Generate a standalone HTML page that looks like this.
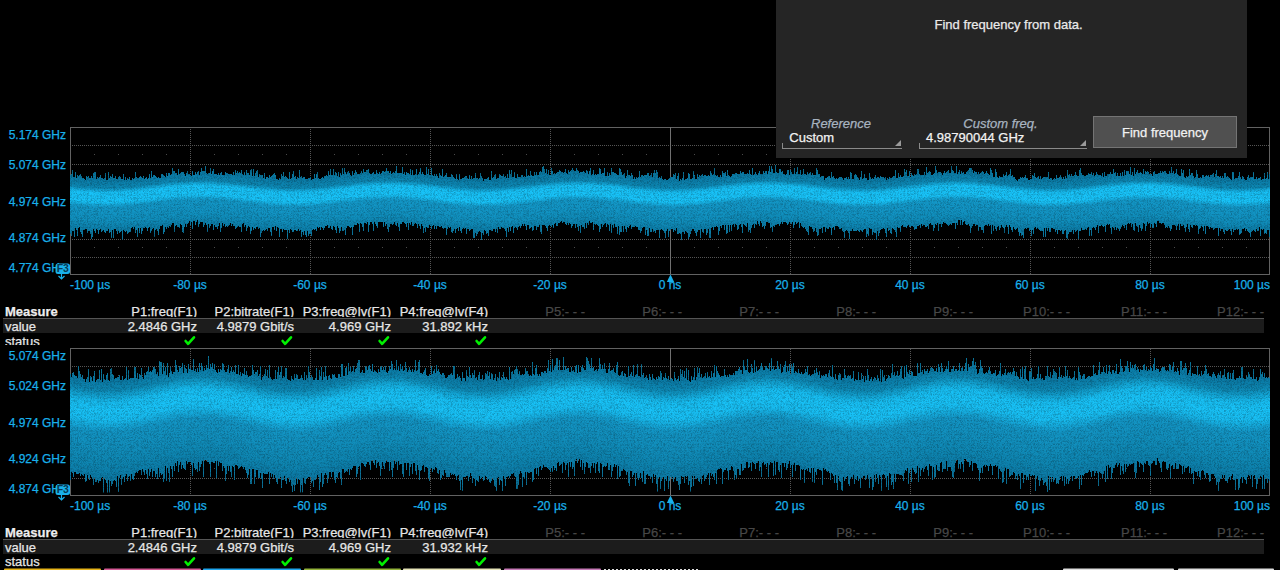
<!DOCTYPE html>
<html><head><meta charset="utf-8"><style>
html,body{margin:0;padding:0;background:#000;width:1280px;height:570px;overflow:hidden}
body{position:relative;font-family:"Liberation Sans",sans-serif}
.t{position:absolute;white-space:nowrap;line-height:1;-webkit-text-stroke:0.25px currentColor}
</style></head><body>
<svg width="1280" height="570" viewBox="0 0 1280 570" style="position:absolute;left:0;top:0"><defs><pattern id="hdot" x="0" y="0" width="2" height="1" patternUnits="userSpaceOnUse"><rect width="1" height="1" fill="#555"/></pattern><pattern id="vdot" x="0" y="1" width="1" height="2" patternUnits="userSpaceOnUse"><rect width="1" height="1" fill="#555"/></pattern><filter id="wf0" x="0" y="117" width="1280" height="170" filterUnits="userSpaceOnUse" color-interpolation-filters="sRGB"><feTurbulence type="turbulence" baseFrequency="3.7" numOctaves="1" seed="3" result="t"/><feColorMatrix in="t" type="matrix" values="1 0 0 0 0  1 0 0 0 0  1 0 0 0 0  0 0 0 0 1" result="n0"/><feComponentTransfer in="n0" result="n"><feFuncR type="table" tableValues="1 0.5 0.5"/><feFuncG type="table" tableValues="1 0.5 0.5"/><feFuncB type="table" tableValues="1 0.5 0.5"/></feComponentTransfer><feComposite in="SourceGraphic" in2="n" operator="arithmetic" k1="0.5" k2="0.55" k3="0" k4="0"/></filter><filter id="wf1" x="0" y="337" width="1280" height="170" filterUnits="userSpaceOnUse" color-interpolation-filters="sRGB"><feTurbulence type="turbulence" baseFrequency="3.7" numOctaves="1" seed="5" result="t"/><feColorMatrix in="t" type="matrix" values="1 0 0 0 0  1 0 0 0 0  1 0 0 0 0  0 0 0 0 1" result="n0"/><feComponentTransfer in="n0" result="n"><feFuncR type="table" tableValues="1 0.5 0.5"/><feFuncG type="table" tableValues="1 0.5 0.5"/><feFuncB type="table" tableValues="1 0.5 0.5"/></feComponentTransfer><feComposite in="SourceGraphic" in2="n" operator="arithmetic" k1="0.5" k2="0.55" k3="0" k4="0"/></filter></defs><rect x="71" y="145" width="1198" height="1" fill="url(#hdot)"/>
<rect x="71" y="164" width="1198" height="1" fill="url(#hdot)"/>
<rect x="71" y="239" width="1198" height="1" fill="url(#hdot)"/>
<rect x="71" y="257" width="1198" height="1" fill="url(#hdot)"/>
<path d="M94,154h1v1h-1zM118,154h1v1h-1zM142,154h1v1h-1zM166,154h1v1h-1zM214,154h1v1h-1zM238,154h1v1h-1zM262,154h1v1h-1zM286,154h1v1h-1zM334,154h1v1h-1zM358,154h1v1h-1zM382,154h1v1h-1zM406,154h1v1h-1zM454,154h1v1h-1zM478,154h1v1h-1zM502,154h1v1h-1zM526,154h1v1h-1zM574,154h1v1h-1zM598,154h1v1h-1zM622,154h1v1h-1zM646,154h1v1h-1zM694,154h1v1h-1zM718,154h1v1h-1zM742,154h1v1h-1zM766,154h1v1h-1zM814,154h1v1h-1zM838,154h1v1h-1zM862,154h1v1h-1zM886,154h1v1h-1zM934,154h1v1h-1zM958,154h1v1h-1zM982,154h1v1h-1zM1006,154h1v1h-1zM1054,154h1v1h-1zM1078,154h1v1h-1zM1102,154h1v1h-1zM1126,154h1v1h-1zM1174,154h1v1h-1zM1198,154h1v1h-1zM1222,154h1v1h-1zM1246,154h1v1h-1z" fill="#4a4a4a"/>
<path d="M94,247h1v1h-1zM118,247h1v1h-1zM142,247h1v1h-1zM166,247h1v1h-1zM214,247h1v1h-1zM238,247h1v1h-1zM262,247h1v1h-1zM286,247h1v1h-1zM334,247h1v1h-1zM358,247h1v1h-1zM382,247h1v1h-1zM406,247h1v1h-1zM454,247h1v1h-1zM478,247h1v1h-1zM502,247h1v1h-1zM526,247h1v1h-1zM574,247h1v1h-1zM598,247h1v1h-1zM622,247h1v1h-1zM646,247h1v1h-1zM694,247h1v1h-1zM718,247h1v1h-1zM742,247h1v1h-1zM766,247h1v1h-1zM814,247h1v1h-1zM838,247h1v1h-1zM862,247h1v1h-1zM886,247h1v1h-1zM934,247h1v1h-1zM958,247h1v1h-1zM982,247h1v1h-1zM1006,247h1v1h-1zM1054,247h1v1h-1zM1078,247h1v1h-1zM1102,247h1v1h-1zM1126,247h1v1h-1zM1174,247h1v1h-1zM1198,247h1v1h-1zM1222,247h1v1h-1zM1246,247h1v1h-1z" fill="#4a4a4a"/>
<rect x="190" y="128" width="1" height="146" fill="url(#vdot)"/>
<rect x="310" y="128" width="1" height="146" fill="url(#vdot)"/>
<rect x="430" y="128" width="1" height="146" fill="url(#vdot)"/>
<rect x="550" y="128" width="1" height="146" fill="url(#vdot)"/>
<rect x="790" y="128" width="1" height="146" fill="url(#vdot)"/>
<rect x="910" y="128" width="1" height="146" fill="url(#vdot)"/>
<rect x="1030" y="128" width="1" height="146" fill="url(#vdot)"/>
<rect x="1150" y="128" width="1" height="146" fill="url(#vdot)"/>
<rect x="70.5" y="127.5" width="1199" height="147" fill="none" stroke="#626262" stroke-width="1"/>
<rect x="670" y="127" width="1" height="147" fill="#707070"/>
<clipPath id="clip0"><path d="M70,175V175H71V174H72V170H73V177H74V177H75V172H76V178H77V175H78V176H79V175H80V174H81V176H82V178H83V178H84V179H85V180H86V176H87V177H88V176H89V178H90V178H91V176H92V178H93V173H94V172H95V172H96V179H97V177H98V178H99V177H100V175H101V178H102V178H103V179H104V178H105V173H106V180H107V180H108V172H109V178H110V176H111V177H112V174H113V178H114V178H115V176H116V179H117V179H118V177H119V176H120V177H121V179H122V179H123V174H124V180H125V177H126V180H127V178H128V179H129V177H130V180H131V180H132V178H133V179H134V178H135V172H136V177H137V178H138V178H139V177H140V176H141V177H142V178H143V176H144V179H145V178H146V177H147V179H148V178H149V174H150V178H151V171H152V177H153V175H154V175H155V176H156V177H157V178H158V177H159V178H160V178H161V174H162V174H163V175H164V176H165V177H166V173H167V176H168V173H169V173H170V175H171V174H172V168H173V171H174V171H175V173H176V173H177V175H178V169H179V174H180V173H181V172H182V172H183V172H184V174H185V176H186V173H187V171H188V174H189V174H190V175H191V176H192V171H193V175H194V175H195V172H196V174H197V172H198V171H199V175H200V172H201V168H202V171H203V171H204V171H205V166H206V173H207V174H208V173H209V173H210V168H211V174H212V171H213V169H214V174H215V174H216V174H217V175H218V173H219V175H220V173H221V172H222V175H223V175H224V175H225V172H226V173H227V173H228V174H229V174H230V174H231V174H232V175H233V172H234V175H235V170H236V173H237V171H238V173H239V172H240V173H241V170H242V174H243V175H244V172H245V175H246V170H247V173H248V173H249V175H250V170H251V169H252V176H253V169H254V176H255V173H256V171H257V170H258V177H259V174H260V175H261V175H262V175H263V178H264V173H265V179H266V177H267V177H268V178H269V175H270V177H271V176H272V175H273V174H274V173H275V175H276V179H277V179H278V180H279V178H280V179H281V174H282V176H283V172H284V177H285V176H286V177H287V178H288V179H289V172H290V179H291V178H292V174H293V171H294V177H295V176H296V179H297V177H298V178H299V170H300V177H301V176H302V178H303V177H304V177H305V179H306V179H307V179H308V178H309V178H310V177H311V180H312V179H313V179H314V174H315V178H316V174H317V172H318V178H319V179H320V179H321V178H322V177H323V178H324V176H325V176H326V175H327V176H328V171H329V175H330V169H331V175H332V175H333V169H334V175H335V172H336V173H337V176H338V172H339V177H340V173H341V175H342V168H343V174H344V168H345V172H346V174H347V172H348V171H349V173H350V175H351V176H352V171H353V175H354V173H355V170H356V172H357V174H358V174H359V174H360V173H361V171H362V173H363V169H364V172H365V172H366V170H367V170H368V169H369V173H370V174H371V174H372V173H373V172H374V174H375V174H376V170H377V173H378V174H379V172H380V174H381V173H382V171H383V171H384V172H385V171H386V168H387V171H388V171H389V173H390V171H391V174H392V173H393V172H394V173H395V171H396V166H397V173H398V173H399V173H400V173H401V173H402V167H403V174H404V172H405V175H406V172H407V173H408V173H409V174H410V169H411V175H412V170H413V175H414V175H415V174H416V169H417V175H418V174H419V172H420V168H421V174H422V172H423V174H424V175H425V175H426V167H427V174H428V169H429V175H430V175H431V168H432V175H433V176H434V174H435V176H436V174H437V176H438V178H439V173H440V175H441V176H442V169H443V177H444V176H445V175H446V173H447V177H448V177H449V177H450V177H451V174H452V175H453V177H454V178H455V179H456V174H457V179H458V180H459V174H460V179H461V179H462V178H463V178H464V177H465V176H466V176H467V178H468V179H469V175H470V179H471V176H472V179H473V178H474V178H475V173H476V178H477V178H478V179H479V178H480V173H481V176H482V178H483V181H484V179H485V179H486V179H487V178H488V177H489V180H490V180H491V171H492V178H493V177H494V175H495V174H496V179H497V178H498V178H499V174H500V175H501V176H502V176H503V174H504V177H505V176H506V178H507V174H508V178H509V170H510V174H511V170H512V177H513V177H514V172H515V178H516V178H517V174H518V177H519V177H520V177H521V175H522V175H523V177H524V176H525V177H526V169H527V176H528V175H529V176H530V171H531V175H532V176H533V176H534V172H535V175H536V172H537V175H538V175H539V172H540V171H541V172H542V167H543V166H544V169H545V173H546V169H547V174H548V170H549V175H550V175H551V168H552V171H553V174H554V173H555V174H556V173H557V172H558V172H559V170H560V171H561V172H562V172H563V173H564V172H565V169H566V173H567V174H568V170H569V172H570V171H571V170H572V168H573V170H574V171H575V171H576V168H577V170H578V171H579V173H580V172H581V172H582V172H583V171H584V172H585V173H586V170H587V171H588V174H589V171H590V168H591V175H592V174H593V170H594V175H595V174H596V175H597V174H598V174H599V168H600V169H601V174H602V173H603V173H604V168H605V176H606V176H607V172H608V176H609V173H610V175H611V168H612V172H613V172H614V173H615V173H616V174H617V175H618V175H619V168H620V169H621V172H622V175H623V174H624V173H625V178H626V176H627V170H628V175H629V175H630V176H631V173H632V175H633V179H634V177H635V179H636V177H637V178H638V177H639V171H640V177H641V175H642V175H643V176H644V175H645V175H646V175H647V173H648V173H649V176H650V175H651V173H652V177H653V173H654V170H655V173H656V170H657V172H658V178H659V177H660V178H661V176H662V179H663V180H664V179H665V179H666V180H667V180H668V179H669V178H670V177H671V177H672V177H673V174H674V175H675V173H676V179H677V176H678V173H679V181H680V179H681V180H682V178H683V172H684V180H685V179H686V179H687V178H688V173H689V174H690V179H691V179H692V178H693V171H694V175H695V179H696V179H697V174H698V177H699V175H700V176H701V175H702V174H703V176H704V175H705V175H706V176H707V176H708V175H709V176H710V171H711V173H712V175H713V174H714V168H715V175H716V176H717V175H718V177H719V177H720V175H721V177H722V171H723V173H724V173H725V172H726V176H727V170H728V175H729V176H730V177H731V176H732V174H733V174H734V174H735V173H736V173H737V174H738V174H739V174H740V171H741V173H742V172H743V172H744V174H745V174H746V174H747V173H748V174H749V170H750V174H751V175H752V168H753V175H754V174H755V172H756V174H757V175H758V173H759V171H760V174H761V174H762V174H763V171H764V173H765V171H766V171H767V174H768V171H769V166H770V172H771V166H772V169H773V173H774V173H775V165H776V172H777V173H778V173H779V169H780V169H781V172H782V171H783V174H784V174H785V175H786V174H787V170H788V170H789V175H790V170H791V172H792V174H793V174H794V168H795V174H796V172H797V167H798V174H799V174H800V170H801V175H802V174H803V169H804V174H805V174H806V175H807V172H808V174H809V173H810V172H811V175H812V173H813V175H814V175H815V175H816V168H817V170H818V174H819V174H820V177H821V176H822V176H823V176H824V180H825V178H826V178H827V177H828V176H829V176H830V178H831V172H832V177H833V176H834V178H835V179H836V178H837V179H838V178H839V177H840V177H841V177H842V178H843V180H844V178H845V178H846V177H847V179H848V177H849V179H850V172H851V173H852V179H853V179H854V175H855V174H856V175H857V177H858V178H859V180H860V177H861V171H862V179H863V178H864V174H865V178H866V178H867V180H868V180H869V173H870V177H871V179H872V178H873V179H874V177H875V175H876V178H877V177H878V177H879V178H880V176H881V177H882V177H883V177H884V178H885V177H886V180H887V178H888V179H889V177H890V178H891V178H892V177H893V176H894V176H895V170H896V178H897V178H898V173H899V177H900V175H901V177H902V177H903V176H904V169H905V172H906V170H907V176H908V176H909V171H910V177H911V173H912V175H913V176H914V174H915V175H916V174H917V169H918V169H919V174H920V175H921V175H922V175H923V175H924V172H925V175H926V167H927V173H928V172H929V171H930V172H931V175H932V175H933V174H934V173H935V166H936V170H937V173H938V172H939V172H940V172H941V173H942V175H943V173H944V171H945V173H946V172H947V171H948V170H949V173H950V173H951V166H952V170H953V171H954V173H955V173H956V166H957V174H958V172H959V170H960V174H961V171H962V173H963V172H964V174H965V174H966V172H967V171H968V170H969V168H970V168H971V168H972V170H973V173H974V171H975V172H976V172H977V174H978V172H979V174H980V173H981V172H982V171H983V172H984V174H985V173H986V171H987V173H988V174H989V175H990V168H991V170H992V173H993V177H994V177H995V169H996V172H997V177H998V178H999V176H1000V177H1001V177H1002V177H1003V174H1004V176H1005V175H1006V172H1007V176H1008V175H1009V174H1010V169H1011V176H1012V175H1013V177H1014V177H1015V179H1016V180H1017V181H1018V179H1019V179H1020V177H1021V178H1022V177H1023V178H1024V177H1025V175H1026V178H1027V178H1028V180H1029V180H1030V179H1031V179H1032V175H1033V176H1034V173H1035V177H1036V178H1037V177H1038V176H1039V179H1040V176H1041V179H1042V178H1043V177H1044V177H1045V177H1046V177H1047V177H1048V172H1049V179H1050V178H1051V178H1052V180H1053V179H1054V178H1055V179H1056V175H1057V178H1058V178H1059V177H1060V175H1061V177H1062V179H1063V177H1064V179H1065V176H1066V178H1067V170H1068V175H1069V174H1070V176H1071V174H1072V176H1073V176H1074V175H1075V172H1076V175H1077V176H1078V176H1079V170H1080V168H1081V173H1082V175H1083V175H1084V176H1085V176H1086V175H1087V175H1088V173H1089V174H1090V174H1091V172H1092V175H1093V173H1094V176H1095V175H1096V172H1097V174H1098V175H1099V175H1100V175H1101V176H1102V173H1103V177H1104V172H1105V176H1106V176H1107V174H1108V174H1109V174H1110V172H1111V174H1112V174H1113V169H1114V173H1115V172H1116V176H1117V173H1118V176H1119V176H1120V173H1121V176H1122V172H1123V176H1124V170H1125V175H1126V171H1127V171H1128V171H1129V174H1130V167H1131V175H1132V172H1133V176H1134V168H1135V174H1136V172H1137V170H1138V173H1139V173H1140V172H1141V173H1142V174H1143V169H1144V174H1145V171H1146V172H1147V171H1148V172H1149V174H1150V174H1151V174H1152V176H1153V172H1154V171H1155V174H1156V174H1157V174H1158V173H1159V173H1160V171H1161V173H1162V171H1163V172H1164V171H1165V171H1166V173H1167V174H1168V174H1169V171H1170V173H1171V167H1172V173H1173V171H1174V174H1175V173H1176V169H1177V174H1178V175H1179V176H1180V176H1181V169H1182V173H1183V170H1184V177H1185V178H1186V176H1187V177H1188V176H1189V169H1190V175H1191V173H1192V173H1193V176H1194V178H1195V177H1196V170H1197V174H1198V178H1199V178H1200V177H1201V178H1202V175H1203V175H1204V177H1205V176H1206V175H1207V176H1208V175H1209V177H1210V175H1211V175H1212V174H1213V173H1214V177H1215V174H1216V170H1217V176H1218V176H1219V177H1220V176H1221V178H1222V176H1223V178H1224V173H1225V173H1226V177H1227V176H1228V177H1229V178H1230V179H1231V180H1232V172H1233V172H1234V179H1235V178H1236V178H1237V178H1238V176H1239V172H1240V177H1241V179H1242V176H1243V177H1244V179H1245V180H1246V180H1247V177H1248V175H1249V178H1250V177H1251V177H1252V177H1253V172H1254V179H1255V179H1256V177H1257V179H1258V178H1259V178H1260V177H1261V180H1262V179H1263V179H1264V173H1265V179H1266V178H1267V172H1268V179H1269V174H1270V237H1269V230H1268V230H1267V234H1266V233H1265V234H1264V229H1263V230H1262V229H1261V236H1260V227H1259V231H1258V231H1257V229H1256V232H1255V231H1254V230H1253V231H1252V232H1251V237H1250V233H1249V232H1248V231H1247V229H1246V231H1245V228H1244V229H1243V229H1242V233H1241V234H1240V235H1239V229H1238V230H1237V229H1236V230H1235V230H1234V232H1233V229H1232V235H1231V231H1230V229H1229V230H1228V231H1227V231H1226V230H1225V234H1224V232H1223V229H1222V229H1221V231H1220V228H1219V236H1218V228H1217V228H1216V228H1215V229H1214V230H1213V228H1212V228H1211V227H1210V229H1209V227H1208V226H1207V226H1206V234H1205V226H1204V231H1203V227H1202V226H1201V228H1200V229H1199V234H1198V226H1197V225H1196V226H1195V225H1194V225H1193V228H1192V227H1191V225H1190V232H1189V229H1188V224H1187V227H1186V232H1185V228H1184V225H1183V226H1182V226H1181V224H1180V230H1179V224H1178V226H1177V230H1176V226H1175V225H1174V225H1173V225H1172V229H1171V231H1170V228H1169V226H1168V228H1167V227H1166V228H1165V225H1164V223H1163V223H1162V224H1161V223H1160V223H1159V221H1158V221H1157V227H1156V224H1155V223H1154V228H1153V228H1152V224H1151V227H1150V223H1149V224H1148V222H1147V226H1146V231H1145V224H1144V223H1143V229H1142V231H1141V228H1140V225H1139V232H1138V227H1137V226H1136V223H1135V231H1134V230H1133V224H1132V227H1131V223H1130V224H1129V223H1128V224H1127V230H1126V225H1125V228H1124V226H1123V225H1122V227H1121V229H1120V231H1119V229H1118V228H1117V230H1116V227H1115V230H1114V228H1113V227H1112V234H1111V228H1110V224H1109V225H1108V224H1107V225H1106V232H1105V226H1104V227H1103V226H1102V225H1101V226H1100V226H1099V233H1098V225H1097V227H1096V230H1095V228H1094V227H1093V228H1092V236H1091V230H1090V236H1089V227H1088V228H1087V230H1086V229H1085V230H1084V230H1083V230H1082V228H1081V231H1080V231H1079V239H1078V230H1077V231H1076V232H1075V230H1074V234H1073V230H1072V232H1071V232H1070V232H1069V234H1068V239H1067V238H1066V230H1065V231H1064V234H1063V234H1062V230H1061V231H1060V230H1059V230H1058V234H1057V230H1056V232H1055V229H1054V229H1053V228H1052V228H1051V232H1050V232H1049V228H1048V231H1047V228H1046V237H1045V228H1044V237H1043V231H1042V231H1041V231H1040V230H1039V229H1038V228H1037V229H1036V227H1035V228H1034V234H1033V230H1032V236H1031V230H1030V231H1029V228H1028V228H1027V229H1026V228H1025V229H1024V238H1023V235H1022V236H1021V233H1020V236H1019V232H1018V228H1017V229H1016V230H1015V229H1014V227H1013V232H1012V230H1011V227H1010V225H1009V234H1008V227H1007V225H1006V227H1005V233H1004V228H1003V227H1002V225H1001V228H1000V230H999V226H998V227H997V231H996V229H995V226H994V231H993V225H992V234H991V225H990V226H989V224H988V226H987V225H986V225H985V226H984V233H983V230H982V230H981V227H980V227H979V231H978V225H977V225H976V226H975V224H974V224H973V226H972V228H971V233H970V226H969V224H968V225H967V225H966V224H965V221H964V222H963V225H962V220H961V225H960V220H959V220H958V225H957V223H956V229H955V223H954V223H953V223H952V225H951V224H950V225H949V226H948V225H947V224H946V223H945V223H944V222H943V224H942V227H941V224H940V224H939V231H938V223H937V225H936V224H935V228H934V231H933V225H932V225H931V223H930V224H929V229H928V226H927V227H926V227H925V225H924V225H923V226H922V224H921V228H920V225H919V226H918V226H917V229H916V229H915V230H914V227H913V226H912V226H911V227H910V227H909V225H908V226H907V228H906V227H905V227H904V227H903V225H902V226H901V232H900V228H899V228H898V227H897V237H896V232H895V230H894V229H893V228H892V234H891V233H890V230H889V231H888V228H887V237H886V233H885V229H884V228H883V229H882V229H881V230H880V233H879V236H878V231H877V240H876V233H875V233H874V232H873V235H872V229H871V229H870V228H869V236H868V234H867V237H866V229H865V229H864V230H863V232H862V231H861V230H860V232H859V231H858V230H857V231H856V231H855V231H854V231H853V229H852V231H851V231H850V239H849V233H848V231H847V230H846V231H845V238H844V232H843V231H842V228H841V229H840V229H839V227H838V226H837V226H836V226H835V230H834V227H833V228H832V235H831V228H830V227H829V229H828V229H827V228H826V232H825V227H824V227H823V233H822V228H821V229H820V229H819V235H818V236H817V232H816V228H815V231H814V232H813V229H812V227H811V227H810V226H809V235H808V232H807V231H806V229H805V227H804V228H803V227H802V226H801V223H800V228H799V222H798V223H797V224H796V222H795V225H794V228H793V222H792V224H791V223H790V222H789V224H788V225H787V223H786V222H785V222H784V222H783V224H782V222H781V224H780V226H779V224H778V224H777V225H776V225H775V227H774V226H773V232H772V227H771V228H770V223H769V223H768V222H767V222H766V226H765V229H764V226H763V227H762V223H761V221H760V226H759V224H758V221H757V225H756V224H755V228H754V224H753V225H752V228H751V233H750V230H749V232H748V223H747V227H746V226H745V225H744V224H743V233H742V227H741V224H740V225H739V229H738V230H737V225H736V224H735V227H734V224H733V225H732V231H731V225H730V232H729V225H728V233H727V234H726V225H725V230H724V225H723V225H722V228H721V226H720V231H719V235H718V227H717V226H716V227H715V227H714V230H713V227H712V228H711V238H710V238H709V229H708V233H707V235H706V229H705V229H704V233H703V232H702V229H701V238H700V230H699V230H698V232H697V236H696V233H695V231H694V229H693V229H692V231H691V234H690V237H689V239H688V233H687V232H686V231H685V234H684V232H683V232H682V241H681V234H680V233H679V234H678V234H677V228H676V231H675V230H674V232H673V229H672V229H671V230H670V231H669V237H668V229H667V231H666V238H665V233H664V231H663V230H662V229H661V230H660V238H659V230H658V230H657V230H656V233H655V231H654V232H653V229H652V232H651V232H650V228H649V236H648V236H647V230H646V235H645V227H644V227H643V228H642V231H641V233H640V230H639V230H638V227H637V227H636V226H635V227H634V227H633V227H632V229H631V225H630V226H629V228H628V227H627V232H626V229H625V226H624V232H623V226H622V232H621V232H620V235H619V226H618V234H617V227H616V227H615V224H614V228H613V225H612V233H611V224H610V231H609V225H608V224H607V227H606V223H605V224H604V225H603V227H602V224H601V229H600V232H599V226H598V225H597V224H596V225H595V224H594V230H593V222H592V223H591V223H590V221H589V225H588V223H587V228H586V223H585V229H584V227H583V227H582V225H581V233H580V226H579V231H578V227H577V224H576V228H575V224H574V224H573V226H572V228H571V224H570V223H569V225H568V223H567V225H566V224H565V222H564V222H563V223H562V221H561V222H560V223H559V223H558V226H557V226H556V223H555V224H554V228H553V225H552V227H551V226H550V225H549V226H548V231H547V228H546V226H545V225H544V225H543V225H542V234H541V232H540V225H539V227H538V227H537V230H536V226H535V226H534V230H533V231H532V227H531V228H530V229H529V225H528V225H527V230H526V226H525V224H524V226H523V224H522V226H521V228H520V226H519V227H518V230H517V228H516V227H515V228H514V233H513V226H512V227H511V231H510V227H509V232H508V228H507V237H506V231H505V229H504V228H503V228H502V227H501V229H500V229H499V227H498V233H497V229H496V232H495V229H494V229H493V231H492V231H491V230H490V230H489V236H488V233H487V234H486V231H485V230H484V235H483V233H482V240H481V232H480V231H479V232H478V234H477V236H476V233H475V238H474V238H473V229H472V229H471V230H470V231H469V229H468V229H467V234H466V228H465V229H464V228H463V229H462V233H461V231H460V227H459V231H458V228H457V229H456V233H455V229H454V231H453V233H452V232H451V227H450V228H449V227H448V229H447V235H446V228H445V228H444V229H443V228H442V226H441V227H440V227H439V226H438V226H437V229H436V226H435V229H434V225H433V226H432V229H431V226H430V225H429V228H428V228H427V227H426V232H425V228H424V233H423V226H422V224H421V229H420V226H419V224H418V228H417V224H416V223H415V224H414V226H413V226H412V222H411V225H410V223H409V230H408V223H407V227H406V224H405V223H404V222H403V222H402V224H401V224H400V231H399V227H398V223H397V226H396V225H395V222H394V224H393V225H392V224H391V224H390V227H389V232H388V229H387V224H386V226H385V222H384V227H383V222H382V222H381V222H380V222H379V222H378V228H377V226H376V224H375V222H374V231H373V224H372V222H371V222H370V225H369V232H368V222H367V224H366V223H365V223H364V231H363V227H362V224H361V223H360V232H359V224H358V223H357V225H356V225H355V225H354V227H353V235H352V227H351V228H350V227H349V226H348V226H347V228H346V235H345V230H344V231H343V231H342V227H341V231H340V233H339V228H338V226H337V233H336V230H335V227H334V226H333V230H332V229H331V226H330V228H329V228H328V225H327V226H326V226H325V228H324V230H323V228H322V227H321V230H320V227H319V228H318V227H317V231H316V229H315V230H314V229H313V230H312V236H311V234H310V234H309V236H308V231H307V237H306V235H305V231H304V235H303V232H302V237H301V230H300V231H299V229H298V231H297V231H296V230H295V230H294V232H293V232H292V230H291V229H290V233H289V230H288V239H287V230H286V230H285V230H284V229H283V232H282V229H281V229H280V237H279V228H278V227H277V231H276V226H275V230H274V227H273V227H272V236H271V232H270V228H269V228H268V231H267V229H266V230H265V231H264V230H263V231H262V233H261V237H260V228H259V229H258V227H257V227H256V229H255V228H254V230H253V227H252V231H251V234H250V227H249V226H248V228H247V231H246V225H245V227H244V223H243V224H242V232H241V227H240V227H239V226H238V227H237V228H236V229H235V226H234V226H233V224H232V226H231V223H230V225H229V226H228V227H227V226H226V227H225V224H224V226H223V223H222V228H221V232H220V223H219V226H218V229H217V227H216V227H215V225H214V230H213V224H212V224H211V226H210V228H209V224H208V232H207V225H206V223H205V225H204V227H203V222H202V222H201V222H200V224H199V227H198V220H197V222H196V225H195V221H194V221H193V229H192V222H191V225H190V221H189V223H188V224H187V227H186V224H185V227H184V233H183V232H182V225H181V224H180V228H179V227H178V227H177V225H176V226H175V232H174V223H173V223H172V225H171V227H170V226H169V228H168V227H167V229H166V227H165V232H164V234H163V225H162V226H161V226H160V229H159V235H158V231H157V229H156V230H155V237H154V228H153V229H152V231H151V233H150V227H149V228H148V231H147V228H146V227H145V228H144V228H143V231H142V234H141V228H140V233H139V228H138V237H137V230H136V233H135V227H134V229H133V227H132V228H131V232H130V232H129V233H128V234H127V231H126V232H125V231H124V230H123V240H122V231H121V232H120V233H119V231H118V234H117V231H116V229H115V229H114V238H113V230H112V238H111V232H110V233H109V229H108V231H107V231H106V233H105V232H104V230H103V231H102V232H101V229H100V230H99V234H98V230H97V229H96V233H95V231H94V229H93V237H92V239H91V234H90V231H89V231H88V233H87V229H86V229H85V230H84V230H83V237H82V234H81V232H80V227H79V228H78V236H77V230H76V228H75V237H74V231H73V231H72V236H71V234H70Z"/></clipPath>
<linearGradient id="prof0" x1="0" y1="0" x2="0" y2="1"><stop offset="0.0000" stop-color="#086a8a"/><stop offset="0.1667" stop-color="#0a76a0"/><stop offset="0.2639" stop-color="#0c82ac"/><stop offset="0.3611" stop-color="#0f8cba"/><stop offset="0.5000" stop-color="#1292c0"/><stop offset="0.6389" stop-color="#118ebc"/><stop offset="0.7500" stop-color="#0f88b4"/><stop offset="0.8333" stop-color="#0c7ca6"/><stop offset="1.0000" stop-color="#0a6e94"/></linearGradient>
<linearGradient id="sprof0" x1="0" y1="0" x2="0" y2="1"><stop offset="0.0000" stop-color="#18c2f6" stop-opacity="0"/><stop offset="0.2632" stop-color="#18c2f6" stop-opacity="0.85"/><stop offset="0.7368" stop-color="#18c2f6" stop-opacity="0.85"/><stop offset="1.0000" stop-color="#18c2f6" stop-opacity="0"/></linearGradient>
<g clip-path="url(#clip0)"><g filter="url(#wf0)"><g fill="url(#prof0)"><rect x="70" y="166.3" width="3" height="72"/><rect x="73" y="166.6" width="3" height="72"/><rect x="76" y="166.9" width="3" height="72"/><rect x="79" y="167.1" width="3" height="72"/><rect x="82" y="167.4" width="3" height="72"/><rect x="85" y="167.6" width="3" height="72"/><rect x="88" y="167.7" width="3" height="72"/><rect x="91" y="167.9" width="3" height="72"/><rect x="94" y="168.0" width="3" height="72"/><rect x="97" y="168.1" width="3" height="72"/><rect x="100" y="168.2" width="3" height="72"/><rect x="103" y="168.2" width="3" height="72"/><rect x="106" y="168.2" width="3" height="72"/><rect x="109" y="168.2" width="3" height="72"/><rect x="112" y="168.1" width="3" height="72"/><rect x="115" y="168.0" width="3" height="72"/><rect x="118" y="167.9" width="3" height="72"/><rect x="121" y="167.7" width="3" height="72"/><rect x="124" y="167.6" width="3" height="72"/><rect x="127" y="167.4" width="3" height="72"/><rect x="130" y="167.1" width="3" height="72"/><rect x="133" y="166.9" width="3" height="72"/><rect x="136" y="166.6" width="3" height="72"/><rect x="139" y="166.3" width="3" height="72"/><rect x="142" y="166.1" width="3" height="72"/><rect x="145" y="165.8" width="3" height="72"/><rect x="148" y="165.4" width="3" height="72"/><rect x="151" y="165.1" width="3" height="72"/><rect x="154" y="164.8" width="3" height="72"/><rect x="157" y="164.5" width="3" height="72"/><rect x="160" y="164.2" width="3" height="72"/><rect x="163" y="163.9" width="3" height="72"/><rect x="166" y="163.6" width="3" height="72"/><rect x="169" y="163.3" width="3" height="72"/><rect x="172" y="163.1" width="3" height="72"/><rect x="175" y="162.9" width="3" height="72"/><rect x="178" y="162.6" width="3" height="72"/><rect x="181" y="162.4" width="3" height="72"/><rect x="184" y="162.3" width="3" height="72"/><rect x="187" y="162.1" width="3" height="72"/><rect x="190" y="162.0" width="3" height="72"/><rect x="193" y="162.0" width="3" height="72"/><rect x="196" y="161.9" width="3" height="72"/><rect x="199" y="161.9" width="3" height="72"/><rect x="202" y="161.9" width="3" height="72"/><rect x="205" y="162.0" width="3" height="72"/><rect x="208" y="162.0" width="3" height="72"/><rect x="211" y="162.1" width="3" height="72"/><rect x="214" y="162.3" width="3" height="72"/><rect x="217" y="162.4" width="3" height="72"/><rect x="220" y="162.6" width="3" height="72"/><rect x="223" y="162.9" width="3" height="72"/><rect x="226" y="163.1" width="3" height="72"/><rect x="229" y="163.3" width="3" height="72"/><rect x="232" y="163.6" width="3" height="72"/><rect x="235" y="163.9" width="3" height="72"/><rect x="238" y="164.2" width="3" height="72"/><rect x="241" y="164.5" width="3" height="72"/><rect x="244" y="164.8" width="3" height="72"/><rect x="247" y="165.1" width="3" height="72"/><rect x="250" y="165.4" width="3" height="72"/><rect x="253" y="165.8" width="3" height="72"/><rect x="256" y="166.1" width="3" height="72"/><rect x="259" y="166.3" width="3" height="72"/><rect x="262" y="166.6" width="3" height="72"/><rect x="265" y="166.9" width="3" height="72"/><rect x="268" y="167.1" width="3" height="72"/><rect x="271" y="167.4" width="3" height="72"/><rect x="274" y="167.6" width="3" height="72"/><rect x="277" y="167.7" width="3" height="72"/><rect x="280" y="167.9" width="3" height="72"/><rect x="283" y="168.0" width="3" height="72"/><rect x="286" y="168.1" width="3" height="72"/><rect x="289" y="168.2" width="3" height="72"/><rect x="292" y="168.2" width="3" height="72"/><rect x="295" y="168.2" width="3" height="72"/><rect x="298" y="168.2" width="3" height="72"/><rect x="301" y="168.1" width="3" height="72"/><rect x="304" y="168.0" width="3" height="72"/><rect x="307" y="167.9" width="3" height="72"/><rect x="310" y="167.7" width="3" height="72"/><rect x="313" y="167.6" width="3" height="72"/><rect x="316" y="167.4" width="3" height="72"/><rect x="319" y="167.1" width="3" height="72"/><rect x="322" y="166.9" width="3" height="72"/><rect x="325" y="166.6" width="3" height="72"/><rect x="328" y="166.3" width="3" height="72"/><rect x="331" y="166.1" width="3" height="72"/><rect x="334" y="165.8" width="3" height="72"/><rect x="337" y="165.4" width="3" height="72"/><rect x="340" y="165.1" width="3" height="72"/><rect x="343" y="164.8" width="3" height="72"/><rect x="346" y="164.5" width="3" height="72"/><rect x="349" y="164.2" width="3" height="72"/><rect x="352" y="163.9" width="3" height="72"/><rect x="355" y="163.6" width="3" height="72"/><rect x="358" y="163.3" width="3" height="72"/><rect x="361" y="163.1" width="3" height="72"/><rect x="364" y="162.9" width="3" height="72"/><rect x="367" y="162.6" width="3" height="72"/><rect x="370" y="162.4" width="3" height="72"/><rect x="373" y="162.3" width="3" height="72"/><rect x="376" y="162.1" width="3" height="72"/><rect x="379" y="162.0" width="3" height="72"/><rect x="382" y="162.0" width="3" height="72"/><rect x="385" y="161.9" width="3" height="72"/><rect x="388" y="161.9" width="3" height="72"/><rect x="391" y="161.9" width="3" height="72"/><rect x="394" y="162.0" width="3" height="72"/><rect x="397" y="162.0" width="3" height="72"/><rect x="400" y="162.1" width="3" height="72"/><rect x="403" y="162.3" width="3" height="72"/><rect x="406" y="162.4" width="3" height="72"/><rect x="409" y="162.6" width="3" height="72"/><rect x="412" y="162.9" width="3" height="72"/><rect x="415" y="163.1" width="3" height="72"/><rect x="418" y="163.3" width="3" height="72"/><rect x="421" y="163.6" width="3" height="72"/><rect x="424" y="163.9" width="3" height="72"/><rect x="427" y="164.2" width="3" height="72"/><rect x="430" y="164.5" width="3" height="72"/><rect x="433" y="164.8" width="3" height="72"/><rect x="436" y="165.1" width="3" height="72"/><rect x="439" y="165.4" width="3" height="72"/><rect x="442" y="165.8" width="3" height="72"/><rect x="445" y="166.1" width="3" height="72"/><rect x="448" y="166.3" width="3" height="72"/><rect x="451" y="166.6" width="3" height="72"/><rect x="454" y="166.9" width="3" height="72"/><rect x="457" y="167.1" width="3" height="72"/><rect x="460" y="167.4" width="3" height="72"/><rect x="463" y="167.6" width="3" height="72"/><rect x="466" y="167.7" width="3" height="72"/><rect x="469" y="167.9" width="3" height="72"/><rect x="472" y="168.0" width="3" height="72"/><rect x="475" y="168.1" width="3" height="72"/><rect x="478" y="168.2" width="3" height="72"/><rect x="481" y="168.2" width="3" height="72"/><rect x="484" y="168.2" width="3" height="72"/><rect x="487" y="168.2" width="3" height="72"/><rect x="490" y="168.1" width="3" height="72"/><rect x="493" y="168.0" width="3" height="72"/><rect x="496" y="167.9" width="3" height="72"/><rect x="499" y="167.7" width="3" height="72"/><rect x="502" y="167.6" width="3" height="72"/><rect x="505" y="167.4" width="3" height="72"/><rect x="508" y="167.1" width="3" height="72"/><rect x="511" y="166.9" width="3" height="72"/><rect x="514" y="166.6" width="3" height="72"/><rect x="517" y="166.3" width="3" height="72"/><rect x="520" y="166.1" width="3" height="72"/><rect x="523" y="165.8" width="3" height="72"/><rect x="526" y="165.4" width="3" height="72"/><rect x="529" y="165.1" width="3" height="72"/><rect x="532" y="164.8" width="3" height="72"/><rect x="535" y="164.5" width="3" height="72"/><rect x="538" y="164.2" width="3" height="72"/><rect x="541" y="163.9" width="3" height="72"/><rect x="544" y="163.6" width="3" height="72"/><rect x="547" y="163.3" width="3" height="72"/><rect x="550" y="163.1" width="3" height="72"/><rect x="553" y="162.9" width="3" height="72"/><rect x="556" y="162.6" width="3" height="72"/><rect x="559" y="162.4" width="3" height="72"/><rect x="562" y="162.3" width="3" height="72"/><rect x="565" y="162.1" width="3" height="72"/><rect x="568" y="162.0" width="3" height="72"/><rect x="571" y="162.0" width="3" height="72"/><rect x="574" y="161.9" width="3" height="72"/><rect x="577" y="161.9" width="3" height="72"/><rect x="580" y="161.9" width="3" height="72"/><rect x="583" y="162.0" width="3" height="72"/><rect x="586" y="162.0" width="3" height="72"/><rect x="589" y="162.1" width="3" height="72"/><rect x="592" y="162.3" width="3" height="72"/><rect x="595" y="162.4" width="3" height="72"/><rect x="598" y="162.6" width="3" height="72"/><rect x="601" y="162.9" width="3" height="72"/><rect x="604" y="163.1" width="3" height="72"/><rect x="607" y="163.3" width="3" height="72"/><rect x="610" y="163.6" width="3" height="72"/><rect x="613" y="163.9" width="3" height="72"/><rect x="616" y="164.2" width="3" height="72"/><rect x="619" y="164.5" width="3" height="72"/><rect x="622" y="164.8" width="3" height="72"/><rect x="625" y="165.1" width="3" height="72"/><rect x="628" y="165.4" width="3" height="72"/><rect x="631" y="165.8" width="3" height="72"/><rect x="634" y="166.1" width="3" height="72"/><rect x="637" y="166.3" width="3" height="72"/><rect x="640" y="166.6" width="3" height="72"/><rect x="643" y="166.9" width="3" height="72"/><rect x="646" y="167.1" width="3" height="72"/><rect x="649" y="167.4" width="3" height="72"/><rect x="652" y="167.6" width="3" height="72"/><rect x="655" y="167.7" width="3" height="72"/><rect x="658" y="167.9" width="3" height="72"/><rect x="661" y="168.0" width="3" height="72"/><rect x="664" y="168.1" width="3" height="72"/><rect x="667" y="168.2" width="3" height="72"/><rect x="670" y="168.2" width="3" height="72"/><rect x="673" y="168.2" width="3" height="72"/><rect x="676" y="168.2" width="3" height="72"/><rect x="679" y="168.1" width="3" height="72"/><rect x="682" y="168.0" width="3" height="72"/><rect x="685" y="167.9" width="3" height="72"/><rect x="688" y="167.7" width="3" height="72"/><rect x="691" y="167.6" width="3" height="72"/><rect x="694" y="167.4" width="3" height="72"/><rect x="697" y="167.1" width="3" height="72"/><rect x="700" y="166.9" width="3" height="72"/><rect x="703" y="166.6" width="3" height="72"/><rect x="706" y="166.3" width="3" height="72"/><rect x="709" y="166.1" width="3" height="72"/><rect x="712" y="165.8" width="3" height="72"/><rect x="715" y="165.4" width="3" height="72"/><rect x="718" y="165.1" width="3" height="72"/><rect x="721" y="164.8" width="3" height="72"/><rect x="724" y="164.5" width="3" height="72"/><rect x="727" y="164.2" width="3" height="72"/><rect x="730" y="163.9" width="3" height="72"/><rect x="733" y="163.6" width="3" height="72"/><rect x="736" y="163.3" width="3" height="72"/><rect x="739" y="163.1" width="3" height="72"/><rect x="742" y="162.9" width="3" height="72"/><rect x="745" y="162.6" width="3" height="72"/><rect x="748" y="162.4" width="3" height="72"/><rect x="751" y="162.3" width="3" height="72"/><rect x="754" y="162.1" width="3" height="72"/><rect x="757" y="162.0" width="3" height="72"/><rect x="760" y="162.0" width="3" height="72"/><rect x="763" y="161.9" width="3" height="72"/><rect x="766" y="161.9" width="3" height="72"/><rect x="769" y="161.9" width="3" height="72"/><rect x="772" y="162.0" width="3" height="72"/><rect x="775" y="162.0" width="3" height="72"/><rect x="778" y="162.1" width="3" height="72"/><rect x="781" y="162.3" width="3" height="72"/><rect x="784" y="162.4" width="3" height="72"/><rect x="787" y="162.6" width="3" height="72"/><rect x="790" y="162.9" width="3" height="72"/><rect x="793" y="163.1" width="3" height="72"/><rect x="796" y="163.3" width="3" height="72"/><rect x="799" y="163.6" width="3" height="72"/><rect x="802" y="163.9" width="3" height="72"/><rect x="805" y="164.2" width="3" height="72"/><rect x="808" y="164.5" width="3" height="72"/><rect x="811" y="164.8" width="3" height="72"/><rect x="814" y="165.1" width="3" height="72"/><rect x="817" y="165.4" width="3" height="72"/><rect x="820" y="165.8" width="3" height="72"/><rect x="823" y="166.1" width="3" height="72"/><rect x="826" y="166.3" width="3" height="72"/><rect x="829" y="166.6" width="3" height="72"/><rect x="832" y="166.9" width="3" height="72"/><rect x="835" y="167.1" width="3" height="72"/><rect x="838" y="167.4" width="3" height="72"/><rect x="841" y="167.6" width="3" height="72"/><rect x="844" y="167.7" width="3" height="72"/><rect x="847" y="167.9" width="3" height="72"/><rect x="850" y="168.0" width="3" height="72"/><rect x="853" y="168.1" width="3" height="72"/><rect x="856" y="168.2" width="3" height="72"/><rect x="859" y="168.2" width="3" height="72"/><rect x="862" y="168.2" width="3" height="72"/><rect x="865" y="168.2" width="3" height="72"/><rect x="868" y="168.1" width="3" height="72"/><rect x="871" y="168.0" width="3" height="72"/><rect x="874" y="167.9" width="3" height="72"/><rect x="877" y="167.7" width="3" height="72"/><rect x="880" y="167.6" width="3" height="72"/><rect x="883" y="167.4" width="3" height="72"/><rect x="886" y="167.1" width="3" height="72"/><rect x="889" y="166.9" width="3" height="72"/><rect x="892" y="166.6" width="3" height="72"/><rect x="895" y="166.3" width="3" height="72"/><rect x="898" y="166.1" width="3" height="72"/><rect x="901" y="165.8" width="3" height="72"/><rect x="904" y="165.4" width="3" height="72"/><rect x="907" y="165.1" width="3" height="72"/><rect x="910" y="164.8" width="3" height="72"/><rect x="913" y="164.5" width="3" height="72"/><rect x="916" y="164.2" width="3" height="72"/><rect x="919" y="163.9" width="3" height="72"/><rect x="922" y="163.6" width="3" height="72"/><rect x="925" y="163.3" width="3" height="72"/><rect x="928" y="163.1" width="3" height="72"/><rect x="931" y="162.9" width="3" height="72"/><rect x="934" y="162.6" width="3" height="72"/><rect x="937" y="162.4" width="3" height="72"/><rect x="940" y="162.3" width="3" height="72"/><rect x="943" y="162.1" width="3" height="72"/><rect x="946" y="162.0" width="3" height="72"/><rect x="949" y="162.0" width="3" height="72"/><rect x="952" y="161.9" width="3" height="72"/><rect x="955" y="161.9" width="3" height="72"/><rect x="958" y="161.9" width="3" height="72"/><rect x="961" y="162.0" width="3" height="72"/><rect x="964" y="162.0" width="3" height="72"/><rect x="967" y="162.1" width="3" height="72"/><rect x="970" y="162.3" width="3" height="72"/><rect x="973" y="162.4" width="3" height="72"/><rect x="976" y="162.6" width="3" height="72"/><rect x="979" y="162.9" width="3" height="72"/><rect x="982" y="163.1" width="3" height="72"/><rect x="985" y="163.3" width="3" height="72"/><rect x="988" y="163.6" width="3" height="72"/><rect x="991" y="163.9" width="3" height="72"/><rect x="994" y="164.2" width="3" height="72"/><rect x="997" y="164.5" width="3" height="72"/><rect x="1000" y="164.8" width="3" height="72"/><rect x="1003" y="165.1" width="3" height="72"/><rect x="1006" y="165.4" width="3" height="72"/><rect x="1009" y="165.8" width="3" height="72"/><rect x="1012" y="166.1" width="3" height="72"/><rect x="1015" y="166.3" width="3" height="72"/><rect x="1018" y="166.6" width="3" height="72"/><rect x="1021" y="166.9" width="3" height="72"/><rect x="1024" y="167.1" width="3" height="72"/><rect x="1027" y="167.4" width="3" height="72"/><rect x="1030" y="167.6" width="3" height="72"/><rect x="1033" y="167.7" width="3" height="72"/><rect x="1036" y="167.9" width="3" height="72"/><rect x="1039" y="168.0" width="3" height="72"/><rect x="1042" y="168.1" width="3" height="72"/><rect x="1045" y="168.2" width="3" height="72"/><rect x="1048" y="168.2" width="3" height="72"/><rect x="1051" y="168.2" width="3" height="72"/><rect x="1054" y="168.2" width="3" height="72"/><rect x="1057" y="168.1" width="3" height="72"/><rect x="1060" y="168.0" width="3" height="72"/><rect x="1063" y="167.9" width="3" height="72"/><rect x="1066" y="167.7" width="3" height="72"/><rect x="1069" y="167.6" width="3" height="72"/><rect x="1072" y="167.4" width="3" height="72"/><rect x="1075" y="167.1" width="3" height="72"/><rect x="1078" y="166.9" width="3" height="72"/><rect x="1081" y="166.6" width="3" height="72"/><rect x="1084" y="166.3" width="3" height="72"/><rect x="1087" y="166.1" width="3" height="72"/><rect x="1090" y="165.8" width="3" height="72"/><rect x="1093" y="165.4" width="3" height="72"/><rect x="1096" y="165.1" width="3" height="72"/><rect x="1099" y="164.8" width="3" height="72"/><rect x="1102" y="164.5" width="3" height="72"/><rect x="1105" y="164.2" width="3" height="72"/><rect x="1108" y="163.9" width="3" height="72"/><rect x="1111" y="163.6" width="3" height="72"/><rect x="1114" y="163.3" width="3" height="72"/><rect x="1117" y="163.1" width="3" height="72"/><rect x="1120" y="162.9" width="3" height="72"/><rect x="1123" y="162.6" width="3" height="72"/><rect x="1126" y="162.4" width="3" height="72"/><rect x="1129" y="162.3" width="3" height="72"/><rect x="1132" y="162.1" width="3" height="72"/><rect x="1135" y="162.0" width="3" height="72"/><rect x="1138" y="162.0" width="3" height="72"/><rect x="1141" y="161.9" width="3" height="72"/><rect x="1144" y="161.9" width="3" height="72"/><rect x="1147" y="161.9" width="3" height="72"/><rect x="1150" y="162.0" width="3" height="72"/><rect x="1153" y="162.0" width="3" height="72"/><rect x="1156" y="162.1" width="3" height="72"/><rect x="1159" y="162.3" width="3" height="72"/><rect x="1162" y="162.4" width="3" height="72"/><rect x="1165" y="162.6" width="3" height="72"/><rect x="1168" y="162.9" width="3" height="72"/><rect x="1171" y="163.1" width="3" height="72"/><rect x="1174" y="163.3" width="3" height="72"/><rect x="1177" y="163.6" width="3" height="72"/><rect x="1180" y="163.9" width="3" height="72"/><rect x="1183" y="164.2" width="3" height="72"/><rect x="1186" y="164.5" width="3" height="72"/><rect x="1189" y="164.8" width="3" height="72"/><rect x="1192" y="165.1" width="3" height="72"/><rect x="1195" y="165.4" width="3" height="72"/><rect x="1198" y="165.8" width="3" height="72"/><rect x="1201" y="166.1" width="3" height="72"/><rect x="1204" y="166.3" width="3" height="72"/><rect x="1207" y="166.6" width="3" height="72"/><rect x="1210" y="166.9" width="3" height="72"/><rect x="1213" y="167.1" width="3" height="72"/><rect x="1216" y="167.4" width="3" height="72"/><rect x="1219" y="167.6" width="3" height="72"/><rect x="1222" y="167.7" width="3" height="72"/><rect x="1225" y="167.9" width="3" height="72"/><rect x="1228" y="168.0" width="3" height="72"/><rect x="1231" y="168.1" width="3" height="72"/><rect x="1234" y="168.2" width="3" height="72"/><rect x="1237" y="168.2" width="3" height="72"/><rect x="1240" y="168.2" width="3" height="72"/><rect x="1243" y="168.2" width="3" height="72"/><rect x="1246" y="168.1" width="3" height="72"/><rect x="1249" y="168.0" width="3" height="72"/><rect x="1252" y="167.9" width="3" height="72"/><rect x="1255" y="167.7" width="3" height="72"/><rect x="1258" y="167.6" width="3" height="72"/><rect x="1261" y="167.4" width="3" height="72"/><rect x="1264" y="167.1" width="3" height="72"/><rect x="1267" y="166.9" width="3" height="72"/></g><g fill="url(#sprof0)"><rect x="70" y="185.8" width="3" height="19"/><rect x="73" y="186.1" width="3" height="19"/><rect x="76" y="186.4" width="3" height="19"/><rect x="79" y="186.7" width="3" height="19"/><rect x="82" y="187.0" width="3" height="19"/><rect x="85" y="187.2" width="3" height="19"/><rect x="88" y="187.4" width="3" height="19"/><rect x="91" y="187.6" width="3" height="19"/><rect x="94" y="187.8" width="3" height="19"/><rect x="97" y="187.9" width="3" height="19"/><rect x="100" y="188.0" width="3" height="19"/><rect x="103" y="188.0" width="3" height="19"/><rect x="106" y="188.0" width="3" height="19"/><rect x="109" y="188.0" width="3" height="19"/><rect x="112" y="187.9" width="3" height="19"/><rect x="115" y="187.8" width="3" height="19"/><rect x="118" y="187.6" width="3" height="19"/><rect x="121" y="187.4" width="3" height="19"/><rect x="124" y="187.2" width="3" height="19"/><rect x="127" y="187.0" width="3" height="19"/><rect x="130" y="186.7" width="3" height="19"/><rect x="133" y="186.4" width="3" height="19"/><rect x="136" y="186.1" width="3" height="19"/><rect x="139" y="185.8" width="3" height="19"/><rect x="142" y="185.4" width="3" height="19"/><rect x="145" y="185.1" width="3" height="19"/><rect x="148" y="184.7" width="3" height="19"/><rect x="151" y="184.3" width="3" height="19"/><rect x="154" y="184.0" width="3" height="19"/><rect x="157" y="183.6" width="3" height="19"/><rect x="160" y="183.2" width="3" height="19"/><rect x="163" y="182.9" width="3" height="19"/><rect x="166" y="182.5" width="3" height="19"/><rect x="169" y="182.2" width="3" height="19"/><rect x="172" y="181.9" width="3" height="19"/><rect x="175" y="181.6" width="3" height="19"/><rect x="178" y="181.4" width="3" height="19"/><rect x="181" y="181.2" width="3" height="19"/><rect x="184" y="181.0" width="3" height="19"/><rect x="187" y="180.8" width="3" height="19"/><rect x="190" y="180.7" width="3" height="19"/><rect x="193" y="180.6" width="3" height="19"/><rect x="196" y="180.5" width="3" height="19"/><rect x="199" y="180.5" width="3" height="19"/><rect x="202" y="180.5" width="3" height="19"/><rect x="205" y="180.6" width="3" height="19"/><rect x="208" y="180.7" width="3" height="19"/><rect x="211" y="180.8" width="3" height="19"/><rect x="214" y="181.0" width="3" height="19"/><rect x="217" y="181.2" width="3" height="19"/><rect x="220" y="181.4" width="3" height="19"/><rect x="223" y="181.6" width="3" height="19"/><rect x="226" y="181.9" width="3" height="19"/><rect x="229" y="182.2" width="3" height="19"/><rect x="232" y="182.5" width="3" height="19"/><rect x="235" y="182.9" width="3" height="19"/><rect x="238" y="183.2" width="3" height="19"/><rect x="241" y="183.6" width="3" height="19"/><rect x="244" y="184.0" width="3" height="19"/><rect x="247" y="184.3" width="3" height="19"/><rect x="250" y="184.7" width="3" height="19"/><rect x="253" y="185.1" width="3" height="19"/><rect x="256" y="185.4" width="3" height="19"/><rect x="259" y="185.8" width="3" height="19"/><rect x="262" y="186.1" width="3" height="19"/><rect x="265" y="186.4" width="3" height="19"/><rect x="268" y="186.7" width="3" height="19"/><rect x="271" y="187.0" width="3" height="19"/><rect x="274" y="187.2" width="3" height="19"/><rect x="277" y="187.4" width="3" height="19"/><rect x="280" y="187.6" width="3" height="19"/><rect x="283" y="187.8" width="3" height="19"/><rect x="286" y="187.9" width="3" height="19"/><rect x="289" y="188.0" width="3" height="19"/><rect x="292" y="188.0" width="3" height="19"/><rect x="295" y="188.0" width="3" height="19"/><rect x="298" y="188.0" width="3" height="19"/><rect x="301" y="187.9" width="3" height="19"/><rect x="304" y="187.8" width="3" height="19"/><rect x="307" y="187.6" width="3" height="19"/><rect x="310" y="187.4" width="3" height="19"/><rect x="313" y="187.2" width="3" height="19"/><rect x="316" y="187.0" width="3" height="19"/><rect x="319" y="186.7" width="3" height="19"/><rect x="322" y="186.4" width="3" height="19"/><rect x="325" y="186.1" width="3" height="19"/><rect x="328" y="185.8" width="3" height="19"/><rect x="331" y="185.4" width="3" height="19"/><rect x="334" y="185.1" width="3" height="19"/><rect x="337" y="184.7" width="3" height="19"/><rect x="340" y="184.3" width="3" height="19"/><rect x="343" y="184.0" width="3" height="19"/><rect x="346" y="183.6" width="3" height="19"/><rect x="349" y="183.2" width="3" height="19"/><rect x="352" y="182.9" width="3" height="19"/><rect x="355" y="182.5" width="3" height="19"/><rect x="358" y="182.2" width="3" height="19"/><rect x="361" y="181.9" width="3" height="19"/><rect x="364" y="181.6" width="3" height="19"/><rect x="367" y="181.4" width="3" height="19"/><rect x="370" y="181.2" width="3" height="19"/><rect x="373" y="181.0" width="3" height="19"/><rect x="376" y="180.8" width="3" height="19"/><rect x="379" y="180.7" width="3" height="19"/><rect x="382" y="180.6" width="3" height="19"/><rect x="385" y="180.5" width="3" height="19"/><rect x="388" y="180.5" width="3" height="19"/><rect x="391" y="180.5" width="3" height="19"/><rect x="394" y="180.6" width="3" height="19"/><rect x="397" y="180.7" width="3" height="19"/><rect x="400" y="180.8" width="3" height="19"/><rect x="403" y="181.0" width="3" height="19"/><rect x="406" y="181.2" width="3" height="19"/><rect x="409" y="181.4" width="3" height="19"/><rect x="412" y="181.6" width="3" height="19"/><rect x="415" y="181.9" width="3" height="19"/><rect x="418" y="182.2" width="3" height="19"/><rect x="421" y="182.5" width="3" height="19"/><rect x="424" y="182.9" width="3" height="19"/><rect x="427" y="183.2" width="3" height="19"/><rect x="430" y="183.6" width="3" height="19"/><rect x="433" y="184.0" width="3" height="19"/><rect x="436" y="184.3" width="3" height="19"/><rect x="439" y="184.7" width="3" height="19"/><rect x="442" y="185.1" width="3" height="19"/><rect x="445" y="185.4" width="3" height="19"/><rect x="448" y="185.8" width="3" height="19"/><rect x="451" y="186.1" width="3" height="19"/><rect x="454" y="186.4" width="3" height="19"/><rect x="457" y="186.7" width="3" height="19"/><rect x="460" y="187.0" width="3" height="19"/><rect x="463" y="187.2" width="3" height="19"/><rect x="466" y="187.4" width="3" height="19"/><rect x="469" y="187.6" width="3" height="19"/><rect x="472" y="187.8" width="3" height="19"/><rect x="475" y="187.9" width="3" height="19"/><rect x="478" y="188.0" width="3" height="19"/><rect x="481" y="188.0" width="3" height="19"/><rect x="484" y="188.0" width="3" height="19"/><rect x="487" y="188.0" width="3" height="19"/><rect x="490" y="187.9" width="3" height="19"/><rect x="493" y="187.8" width="3" height="19"/><rect x="496" y="187.6" width="3" height="19"/><rect x="499" y="187.4" width="3" height="19"/><rect x="502" y="187.2" width="3" height="19"/><rect x="505" y="187.0" width="3" height="19"/><rect x="508" y="186.7" width="3" height="19"/><rect x="511" y="186.4" width="3" height="19"/><rect x="514" y="186.1" width="3" height="19"/><rect x="517" y="185.8" width="3" height="19"/><rect x="520" y="185.4" width="3" height="19"/><rect x="523" y="185.1" width="3" height="19"/><rect x="526" y="184.7" width="3" height="19"/><rect x="529" y="184.3" width="3" height="19"/><rect x="532" y="184.0" width="3" height="19"/><rect x="535" y="183.6" width="3" height="19"/><rect x="538" y="183.2" width="3" height="19"/><rect x="541" y="182.9" width="3" height="19"/><rect x="544" y="182.5" width="3" height="19"/><rect x="547" y="182.2" width="3" height="19"/><rect x="550" y="181.9" width="3" height="19"/><rect x="553" y="181.6" width="3" height="19"/><rect x="556" y="181.4" width="3" height="19"/><rect x="559" y="181.2" width="3" height="19"/><rect x="562" y="181.0" width="3" height="19"/><rect x="565" y="180.8" width="3" height="19"/><rect x="568" y="180.7" width="3" height="19"/><rect x="571" y="180.6" width="3" height="19"/><rect x="574" y="180.5" width="3" height="19"/><rect x="577" y="180.5" width="3" height="19"/><rect x="580" y="180.5" width="3" height="19"/><rect x="583" y="180.6" width="3" height="19"/><rect x="586" y="180.7" width="3" height="19"/><rect x="589" y="180.8" width="3" height="19"/><rect x="592" y="181.0" width="3" height="19"/><rect x="595" y="181.2" width="3" height="19"/><rect x="598" y="181.4" width="3" height="19"/><rect x="601" y="181.6" width="3" height="19"/><rect x="604" y="181.9" width="3" height="19"/><rect x="607" y="182.2" width="3" height="19"/><rect x="610" y="182.5" width="3" height="19"/><rect x="613" y="182.9" width="3" height="19"/><rect x="616" y="183.2" width="3" height="19"/><rect x="619" y="183.6" width="3" height="19"/><rect x="622" y="184.0" width="3" height="19"/><rect x="625" y="184.3" width="3" height="19"/><rect x="628" y="184.7" width="3" height="19"/><rect x="631" y="185.1" width="3" height="19"/><rect x="634" y="185.4" width="3" height="19"/><rect x="637" y="185.8" width="3" height="19"/><rect x="640" y="186.1" width="3" height="19"/><rect x="643" y="186.4" width="3" height="19"/><rect x="646" y="186.7" width="3" height="19"/><rect x="649" y="187.0" width="3" height="19"/><rect x="652" y="187.2" width="3" height="19"/><rect x="655" y="187.4" width="3" height="19"/><rect x="658" y="187.6" width="3" height="19"/><rect x="661" y="187.8" width="3" height="19"/><rect x="664" y="187.9" width="3" height="19"/><rect x="667" y="188.0" width="3" height="19"/><rect x="670" y="188.0" width="3" height="19"/><rect x="673" y="188.0" width="3" height="19"/><rect x="676" y="188.0" width="3" height="19"/><rect x="679" y="187.9" width="3" height="19"/><rect x="682" y="187.8" width="3" height="19"/><rect x="685" y="187.6" width="3" height="19"/><rect x="688" y="187.4" width="3" height="19"/><rect x="691" y="187.2" width="3" height="19"/><rect x="694" y="187.0" width="3" height="19"/><rect x="697" y="186.7" width="3" height="19"/><rect x="700" y="186.4" width="3" height="19"/><rect x="703" y="186.1" width="3" height="19"/><rect x="706" y="185.8" width="3" height="19"/><rect x="709" y="185.4" width="3" height="19"/><rect x="712" y="185.1" width="3" height="19"/><rect x="715" y="184.7" width="3" height="19"/><rect x="718" y="184.3" width="3" height="19"/><rect x="721" y="184.0" width="3" height="19"/><rect x="724" y="183.6" width="3" height="19"/><rect x="727" y="183.2" width="3" height="19"/><rect x="730" y="182.9" width="3" height="19"/><rect x="733" y="182.5" width="3" height="19"/><rect x="736" y="182.2" width="3" height="19"/><rect x="739" y="181.9" width="3" height="19"/><rect x="742" y="181.6" width="3" height="19"/><rect x="745" y="181.4" width="3" height="19"/><rect x="748" y="181.2" width="3" height="19"/><rect x="751" y="181.0" width="3" height="19"/><rect x="754" y="180.8" width="3" height="19"/><rect x="757" y="180.7" width="3" height="19"/><rect x="760" y="180.6" width="3" height="19"/><rect x="763" y="180.5" width="3" height="19"/><rect x="766" y="180.5" width="3" height="19"/><rect x="769" y="180.5" width="3" height="19"/><rect x="772" y="180.6" width="3" height="19"/><rect x="775" y="180.7" width="3" height="19"/><rect x="778" y="180.8" width="3" height="19"/><rect x="781" y="181.0" width="3" height="19"/><rect x="784" y="181.2" width="3" height="19"/><rect x="787" y="181.4" width="3" height="19"/><rect x="790" y="181.6" width="3" height="19"/><rect x="793" y="181.9" width="3" height="19"/><rect x="796" y="182.2" width="3" height="19"/><rect x="799" y="182.5" width="3" height="19"/><rect x="802" y="182.9" width="3" height="19"/><rect x="805" y="183.2" width="3" height="19"/><rect x="808" y="183.6" width="3" height="19"/><rect x="811" y="184.0" width="3" height="19"/><rect x="814" y="184.3" width="3" height="19"/><rect x="817" y="184.7" width="3" height="19"/><rect x="820" y="185.1" width="3" height="19"/><rect x="823" y="185.4" width="3" height="19"/><rect x="826" y="185.8" width="3" height="19"/><rect x="829" y="186.1" width="3" height="19"/><rect x="832" y="186.4" width="3" height="19"/><rect x="835" y="186.7" width="3" height="19"/><rect x="838" y="187.0" width="3" height="19"/><rect x="841" y="187.2" width="3" height="19"/><rect x="844" y="187.4" width="3" height="19"/><rect x="847" y="187.6" width="3" height="19"/><rect x="850" y="187.8" width="3" height="19"/><rect x="853" y="187.9" width="3" height="19"/><rect x="856" y="188.0" width="3" height="19"/><rect x="859" y="188.0" width="3" height="19"/><rect x="862" y="188.0" width="3" height="19"/><rect x="865" y="188.0" width="3" height="19"/><rect x="868" y="187.9" width="3" height="19"/><rect x="871" y="187.8" width="3" height="19"/><rect x="874" y="187.6" width="3" height="19"/><rect x="877" y="187.4" width="3" height="19"/><rect x="880" y="187.2" width="3" height="19"/><rect x="883" y="187.0" width="3" height="19"/><rect x="886" y="186.7" width="3" height="19"/><rect x="889" y="186.4" width="3" height="19"/><rect x="892" y="186.1" width="3" height="19"/><rect x="895" y="185.8" width="3" height="19"/><rect x="898" y="185.4" width="3" height="19"/><rect x="901" y="185.1" width="3" height="19"/><rect x="904" y="184.7" width="3" height="19"/><rect x="907" y="184.3" width="3" height="19"/><rect x="910" y="184.0" width="3" height="19"/><rect x="913" y="183.6" width="3" height="19"/><rect x="916" y="183.2" width="3" height="19"/><rect x="919" y="182.9" width="3" height="19"/><rect x="922" y="182.5" width="3" height="19"/><rect x="925" y="182.2" width="3" height="19"/><rect x="928" y="181.9" width="3" height="19"/><rect x="931" y="181.6" width="3" height="19"/><rect x="934" y="181.4" width="3" height="19"/><rect x="937" y="181.2" width="3" height="19"/><rect x="940" y="181.0" width="3" height="19"/><rect x="943" y="180.8" width="3" height="19"/><rect x="946" y="180.7" width="3" height="19"/><rect x="949" y="180.6" width="3" height="19"/><rect x="952" y="180.5" width="3" height="19"/><rect x="955" y="180.5" width="3" height="19"/><rect x="958" y="180.5" width="3" height="19"/><rect x="961" y="180.6" width="3" height="19"/><rect x="964" y="180.7" width="3" height="19"/><rect x="967" y="180.8" width="3" height="19"/><rect x="970" y="181.0" width="3" height="19"/><rect x="973" y="181.2" width="3" height="19"/><rect x="976" y="181.4" width="3" height="19"/><rect x="979" y="181.6" width="3" height="19"/><rect x="982" y="181.9" width="3" height="19"/><rect x="985" y="182.2" width="3" height="19"/><rect x="988" y="182.5" width="3" height="19"/><rect x="991" y="182.9" width="3" height="19"/><rect x="994" y="183.2" width="3" height="19"/><rect x="997" y="183.6" width="3" height="19"/><rect x="1000" y="184.0" width="3" height="19"/><rect x="1003" y="184.3" width="3" height="19"/><rect x="1006" y="184.7" width="3" height="19"/><rect x="1009" y="185.1" width="3" height="19"/><rect x="1012" y="185.4" width="3" height="19"/><rect x="1015" y="185.8" width="3" height="19"/><rect x="1018" y="186.1" width="3" height="19"/><rect x="1021" y="186.4" width="3" height="19"/><rect x="1024" y="186.7" width="3" height="19"/><rect x="1027" y="187.0" width="3" height="19"/><rect x="1030" y="187.2" width="3" height="19"/><rect x="1033" y="187.4" width="3" height="19"/><rect x="1036" y="187.6" width="3" height="19"/><rect x="1039" y="187.8" width="3" height="19"/><rect x="1042" y="187.9" width="3" height="19"/><rect x="1045" y="188.0" width="3" height="19"/><rect x="1048" y="188.0" width="3" height="19"/><rect x="1051" y="188.0" width="3" height="19"/><rect x="1054" y="188.0" width="3" height="19"/><rect x="1057" y="187.9" width="3" height="19"/><rect x="1060" y="187.8" width="3" height="19"/><rect x="1063" y="187.6" width="3" height="19"/><rect x="1066" y="187.4" width="3" height="19"/><rect x="1069" y="187.2" width="3" height="19"/><rect x="1072" y="187.0" width="3" height="19"/><rect x="1075" y="186.7" width="3" height="19"/><rect x="1078" y="186.4" width="3" height="19"/><rect x="1081" y="186.1" width="3" height="19"/><rect x="1084" y="185.8" width="3" height="19"/><rect x="1087" y="185.4" width="3" height="19"/><rect x="1090" y="185.1" width="3" height="19"/><rect x="1093" y="184.7" width="3" height="19"/><rect x="1096" y="184.3" width="3" height="19"/><rect x="1099" y="184.0" width="3" height="19"/><rect x="1102" y="183.6" width="3" height="19"/><rect x="1105" y="183.2" width="3" height="19"/><rect x="1108" y="182.9" width="3" height="19"/><rect x="1111" y="182.5" width="3" height="19"/><rect x="1114" y="182.2" width="3" height="19"/><rect x="1117" y="181.9" width="3" height="19"/><rect x="1120" y="181.6" width="3" height="19"/><rect x="1123" y="181.4" width="3" height="19"/><rect x="1126" y="181.2" width="3" height="19"/><rect x="1129" y="181.0" width="3" height="19"/><rect x="1132" y="180.8" width="3" height="19"/><rect x="1135" y="180.7" width="3" height="19"/><rect x="1138" y="180.6" width="3" height="19"/><rect x="1141" y="180.5" width="3" height="19"/><rect x="1144" y="180.5" width="3" height="19"/><rect x="1147" y="180.5" width="3" height="19"/><rect x="1150" y="180.6" width="3" height="19"/><rect x="1153" y="180.7" width="3" height="19"/><rect x="1156" y="180.8" width="3" height="19"/><rect x="1159" y="181.0" width="3" height="19"/><rect x="1162" y="181.2" width="3" height="19"/><rect x="1165" y="181.4" width="3" height="19"/><rect x="1168" y="181.6" width="3" height="19"/><rect x="1171" y="181.9" width="3" height="19"/><rect x="1174" y="182.2" width="3" height="19"/><rect x="1177" y="182.5" width="3" height="19"/><rect x="1180" y="182.9" width="3" height="19"/><rect x="1183" y="183.2" width="3" height="19"/><rect x="1186" y="183.6" width="3" height="19"/><rect x="1189" y="184.0" width="3" height="19"/><rect x="1192" y="184.3" width="3" height="19"/><rect x="1195" y="184.7" width="3" height="19"/><rect x="1198" y="185.1" width="3" height="19"/><rect x="1201" y="185.4" width="3" height="19"/><rect x="1204" y="185.8" width="3" height="19"/><rect x="1207" y="186.1" width="3" height="19"/><rect x="1210" y="186.4" width="3" height="19"/><rect x="1213" y="186.7" width="3" height="19"/><rect x="1216" y="187.0" width="3" height="19"/><rect x="1219" y="187.2" width="3" height="19"/><rect x="1222" y="187.4" width="3" height="19"/><rect x="1225" y="187.6" width="3" height="19"/><rect x="1228" y="187.8" width="3" height="19"/><rect x="1231" y="187.9" width="3" height="19"/><rect x="1234" y="188.0" width="3" height="19"/><rect x="1237" y="188.0" width="3" height="19"/><rect x="1240" y="188.0" width="3" height="19"/><rect x="1243" y="188.0" width="3" height="19"/><rect x="1246" y="187.9" width="3" height="19"/><rect x="1249" y="187.8" width="3" height="19"/><rect x="1252" y="187.6" width="3" height="19"/><rect x="1255" y="187.4" width="3" height="19"/><rect x="1258" y="187.2" width="3" height="19"/><rect x="1261" y="187.0" width="3" height="19"/><rect x="1264" y="186.7" width="3" height="19"/><rect x="1267" y="186.4" width="3" height="19"/></g></g></g><rect x="71" y="366" width="1198" height="1" fill="url(#hdot)"/>
<rect x="71" y="385" width="1198" height="1" fill="url(#hdot)"/>
<rect x="71" y="460" width="1198" height="1" fill="url(#hdot)"/>
<rect x="71" y="478" width="1198" height="1" fill="url(#hdot)"/>
<path d="M94,375h1v1h-1zM118,375h1v1h-1zM142,375h1v1h-1zM166,375h1v1h-1zM214,375h1v1h-1zM238,375h1v1h-1zM262,375h1v1h-1zM286,375h1v1h-1zM334,375h1v1h-1zM358,375h1v1h-1zM382,375h1v1h-1zM406,375h1v1h-1zM454,375h1v1h-1zM478,375h1v1h-1zM502,375h1v1h-1zM526,375h1v1h-1zM574,375h1v1h-1zM598,375h1v1h-1zM622,375h1v1h-1zM646,375h1v1h-1zM694,375h1v1h-1zM718,375h1v1h-1zM742,375h1v1h-1zM766,375h1v1h-1zM814,375h1v1h-1zM838,375h1v1h-1zM862,375h1v1h-1zM886,375h1v1h-1zM934,375h1v1h-1zM958,375h1v1h-1zM982,375h1v1h-1zM1006,375h1v1h-1zM1054,375h1v1h-1zM1078,375h1v1h-1zM1102,375h1v1h-1zM1126,375h1v1h-1zM1174,375h1v1h-1zM1198,375h1v1h-1zM1222,375h1v1h-1zM1246,375h1v1h-1z" fill="#4a4a4a"/>
<path d="M94,468h1v1h-1zM118,468h1v1h-1zM142,468h1v1h-1zM166,468h1v1h-1zM214,468h1v1h-1zM238,468h1v1h-1zM262,468h1v1h-1zM286,468h1v1h-1zM334,468h1v1h-1zM358,468h1v1h-1zM382,468h1v1h-1zM406,468h1v1h-1zM454,468h1v1h-1zM478,468h1v1h-1zM502,468h1v1h-1zM526,468h1v1h-1zM574,468h1v1h-1zM598,468h1v1h-1zM622,468h1v1h-1zM646,468h1v1h-1zM694,468h1v1h-1zM718,468h1v1h-1zM742,468h1v1h-1zM766,468h1v1h-1zM814,468h1v1h-1zM838,468h1v1h-1zM862,468h1v1h-1zM886,468h1v1h-1zM934,468h1v1h-1zM958,468h1v1h-1zM982,468h1v1h-1zM1006,468h1v1h-1zM1054,468h1v1h-1zM1078,468h1v1h-1zM1102,468h1v1h-1zM1126,468h1v1h-1zM1174,468h1v1h-1zM1198,468h1v1h-1zM1222,468h1v1h-1zM1246,468h1v1h-1z" fill="#4a4a4a"/>
<rect x="190" y="349" width="1" height="146" fill="url(#vdot)"/>
<rect x="310" y="349" width="1" height="146" fill="url(#vdot)"/>
<rect x="430" y="349" width="1" height="146" fill="url(#vdot)"/>
<rect x="550" y="349" width="1" height="146" fill="url(#vdot)"/>
<rect x="790" y="349" width="1" height="146" fill="url(#vdot)"/>
<rect x="910" y="349" width="1" height="146" fill="url(#vdot)"/>
<rect x="1030" y="349" width="1" height="146" fill="url(#vdot)"/>
<rect x="1150" y="349" width="1" height="146" fill="url(#vdot)"/>
<rect x="70.5" y="348.5" width="1199" height="147" fill="none" stroke="#626262" stroke-width="1"/>
<rect x="670" y="348" width="1" height="147" fill="#707070"/>
<clipPath id="clip1"><path d="M70,374V374H71V377H72V373H73V372H74V375H75V376H76V376H77V378H78V366H79V371H80V374H81V377H82V375H83V379H84V379H85V382H86V379H87V377H88V369H89V382H90V376H91V377H92V381H93V376H94V371H95V382H96V380H97V379H98V379H99V370H100V380H101V369H102V382H103V374H104V379H105V380H106V375H107V373H108V380H109V381H110V369H111V368H112V374H113V375H114V379H115V378H116V378H117V377H118V377H119V375H120V380H121V380H122V376H123V380H124V379H125V378H126V367H127V380H128V370H129V379H130V378H131V378H132V378H133V378H134V367H135V367H136V378H137V373H138V379H139V374H140V375H141V368H142V377H143V379H144V373H145V375H146V372H147V371H148V367H149V372H150V371H151V372H152V370H153V367H154V367H155V369H156V374H157V372H158V376H159V361H160V362H161V362H162V374H163V363H164V371H165V367H166V375H167V363H168V377H169V373H170V367H171V371H172V374H173V372H174V372H175V360H176V365H177V370H178V372H179V366H180V368H181V367H182V363H183V373H184V365H185V368H186V369H187V373H188V364H189V369H190V368H191V370H192V370H193V359H194V371H195V369H196V372H197V368H198V372H199V363H200V370H201V363H202V366H203V371H204V368H205V370H206V365H207V368H208V356H209V369H210V364H211V367H212V363H213V369H214V364H215V370H216V372H217V373H218V369H219V372H220V369H221V370H222V363H223V364H224V370H225V372H226V372H227V369H228V365H229V373H230V371H231V367H232V372H233V370H234V372H235V365H236V374H237V374H238V365H239V375H240V372H241V376H242V373H243V374H244V368H245V375H246V371H247V375H248V377H249V376H250V376H251V375H252V365H253V370H254V374H255V372H256V372H257V370H258V376H259V374H260V366H261V380H262V377H263V376H264V374H265V369H266V376H267V370H268V378H269V365H270V377H271V379H272V380H273V379H274V379H275V370H276V379H277V372H278V367H279V375H280V372H281V366H282V378H283V376H284V377H285V368H286V368H287V379H288V380H289V380H290V381H291V376H292V379H293V380H294V374H295V378H296V374H297V375H298V379H299V379H300V378H301V375H302V378H303V380H304V372H305V380H306V375H307V378H308V366H309V372H310V378H311V375H312V377H313V380H314V380H315V378H316V368H317V380H318V380H319V370H320V376H321V367H322V380H323V372H324V377H325V366H326V376H327V380H328V376H329V375H330V378H331V379H332V374H333V375H334V374H335V377H336V378H337V378H338V374H339V374H340V377H341V364H342V364H343V376H344V376H345V368H346V367H347V375H348V363H349V371H350V367H351V372H352V371H353V366H354V372H355V369H356V368H357V363H358V360H359V360H360V373H361V372H362V370H363V373H364V373H365V366H366V367H367V370H368V366H369V365H370V369H371V371H372V364H373V372H374V370H375V371H376V372H377V373H378V369H379V372H380V367H381V366H382V370H383V367H384V370H385V366H386V372H387V373H388V371H389V366H390V369H391V361H392V364H393V370H394V368H395V370H396V360H397V370H398V366H399V371H400V364H401V369H402V366H403V371H404V370H405V362H406V368H407V372H408V370H409V367H410V370H411V372H412V369H413V372H414V370H415V360H416V371H417V370H418V362H419V360H420V373H421V373H422V374H423V372H424V370H425V368H426V375H427V376H428V376H429V374H430V375H431V366H432V374H433V371H434V369H435V373H436V365H437V371H438V369H439V372H440V374H441V375H442V373H443V373H444V375H445V378H446V378H447V377H448V375H449V375H450V374H451V373H452V375H453V366H454V366H455V379H456V378H457V374H458V377H459V376H460V378H461V381H462V372H463V378H464V378H465V381H466V370H467V376H468V377H469V367H470V375H471V378H472V373H473V375H474V370H475V378H476V377H477V380H478V375H479V372H480V379H481V379H482V375H483V380H484V379H485V373H486V374H487V371H488V376H489V372H490V379H491V373H492V374H493V380H494V378H495V374H496V381H497V377H498V378H499V372H500V380H501V377H502V378H503V372H504V377H505V379H506V377H507V379H508V380H509V367H510V379H511V372H512V371H513V374H514V370H515V369H516V366H517V369H518V374H519V371H520V375H521V375H522V374H523V375H524V374H525V368H526V371H527V371H528V374H529V376H530V375H531V376H532V362H533V374H534V375H535V368H536V365H537V374H538V376H539V374H540V376H541V372H542V372H543V373H544V371H545V371H546V373H547V368H548V360H549V371H550V365H551V372H552V359H553V370H554V367H555V365H556V358H557V358H558V370H559V360H560V370H561V370H562V370H563V357H564V370H565V366H566V369H567V368H568V368H569V372H570V372H571V367H572V371H573V370H574V372H575V366H576V365H577V373H578V365H579V372H580V372H581V367H582V365H583V368H584V370H585V370H586V357H587V358H588V361H589V364H590V368H591V358H592V368H593V367H594V371H595V370H596V369H597V371H598V369H599V358H600V364H601V369H602V365H603V369H604V363H605V369H606V373H607V373H608V369H609V363H610V371H611V370H612V370H613V368H614V372H615V373H616V365H617V362H618V375H619V376H620V375H621V372H622V371H623V376H624V373H625V374H626V377H627V377H628V366H629V376H630V374H631V372H632V376H633V365H634V377H635V375H636V374H637V364H638V376H639V376H640V377H641V364H642V375H643V373H644V378H645V377H646V376H647V378H648V380H649V374H650V377H651V380H652V374H653V378H654V379H655V380H656V377H657V379H658V376H659V377H660V371H661V373H662V380H663V377H664V378H665V373H666V378H667V379H668V376H669V380H670V379H671V378H672V379H673V381H674V372H675V378H676V380H677V379H678V376H679V381H680V369H681V374H682V370H683V377H684V371H685V378H686V368H687V380H688V370H689V381H690V382H691V376H692V380H693V377H694V368H695V380H696V377H697V367H698V373H699V368H700V377H701V374H702V378H703V377H704V376H705V373H706V378H707V372H708V377H709V376H710V378H711V371H712V377H713V373H714V365H715V377H716V366H717V371H718V373H719V375H720V377H721V376H722V376H723V376H724V369H725V375H726V377H727V375H728V377H729V374H730V375H731V375H732V375H733V373H734V375H735V371H736V371H737V371H738V369H739V367H740V370H741V370H742V374H743V360H744V366H745V370H746V370H747V359H748V372H749V373H750V372H751V364H752V368H753V373H754V360H755V372H756V367H757V371H758V370H759V369H760V366H761V363H762V367H763V370H764V370H765V366H766V366H767V368H768V369H769V363H770V371H771V358H772V369H773V366H774V370H775V369H776V369H777V361H778V367H779V369H780V364H781V373H782V372H783V367H784V365H785V361H786V372H787V366H788V371H789V364H790V374H791V364H792V367H793V363H794V373H795V371H796V372H797V373H798V369H799V373H800V374H801V372H802V374H803V374H804V373H805V369H806V372H807V366H808V375H809V374H810V376H811V375H812V374H813V374H814V370H815V373H816V368H817V372H818V375H819V371H820V378H821V375H822V376H823V375H824V376H825V374H826V374H827V377H828V373H829V370H830V376H831V377H832V365H833V377H834V379H835V374H836V379H837V380H838V375H839V373H840V374H841V380H842V378H843V378H844V369H845V375H846V378H847V376H848V375H849V376H850V375H851V379H852V378H853V371H854V381H855V379H856V380H857V380H858V372H859V380H860V380H861V373H862V379H863V376H864V382H865V376H866V380H867V369H868V375H869V381H870V379H871V377H872V381H873V379H874V377H875V378H876V380H877V375H878V378H879V381H880V369H881V382H882V370H883V377H884V375H885V381H886V379H887V378H888V375H889V376H890V378H891V373H892V364H893V375H894V372H895V376H896V375H897V371H898V376H899V375H900V369H901V366H902V378H903V379H904V366H905V377H906V365H907V372H908V374H909V370H910V375H911V371H912V372H913V376H914V376H915V376H916V376H917V363H918V373H919V373H920V363H921V372H922V370H923V374H924V369H925V371H926V371H927V369H928V373H929V371H930V368H931V367H932V368H933V369H934V371H935V371H936V368H937V372H938V364H939V367H940V372H941V363H942V368H943V372H944V371H945V369H946V366H947V369H948V361H949V372H950V372H951V369H952V369H953V366H954V371H955V369H956V369H957V371H958V370H959V363H960V371H961V368H962V367H963V371H964V369H965V363H966V358H967V371H968V364H969V367H970V367H971V366H972V361H973V358H974V365H975V362H976V369H977V374H978V373H979V369H980V360H981V366H982V368H983V373H984V374H985V373H986V372H987V373H988V370H989V367H990V371H991V374H992V374H993V373H994V373H995V370H996V376H997V375H998V374H999V371H1000V363H1001V376H1002V374H1003V375H1004V373H1005V369H1006V375H1007V373H1008V372H1009V373H1010V372H1011V374H1012V372H1013V368H1014V371H1015V376H1016V372H1017V376H1018V377H1019V379H1020V369H1021V377H1022V367H1023V379H1024V369H1025V366H1026V379H1027V380H1028V381H1029V371H1030V372H1031V368H1032V379H1033V377H1034V379H1035V379H1036V378H1037V374H1038V366H1039V378H1040V374H1041V379H1042V378H1043V380H1044V380H1045V376H1046V376H1047V366H1048V376H1049V377H1050V372H1051V378H1052V375H1053V369H1054V371H1055V372H1056V373H1057V379H1058V377H1059V367H1060V377H1061V375H1062V378H1063V376H1064V377H1065V366H1066V376H1067V370H1068V378H1069V376H1070V378H1071V379H1072V378H1073V377H1074V371H1075V380H1076V378H1077V380H1078V367H1079V372H1080V375H1081V379H1082V376H1083V374H1084V374H1085V379H1086V378H1087V377H1088V376H1089V376H1090V377H1091V376H1092V376H1093V365H1094V374H1095V373H1096V375H1097V375H1098V370H1099V362H1100V374H1101V372H1102V372H1103V367H1104V372H1105V373H1106V365H1107V374H1108V371H1109V365H1110V372H1111V374H1112V370H1113V370H1114V373H1115V371H1116V364H1117V374H1118V374H1119V372H1120V359H1121V366H1122V368H1123V372H1124V371H1125V366H1126V366H1127V361H1128V368H1129V372H1130V362H1131V368H1132V365H1133V368H1134V365H1135V364H1136V370H1137V367H1138V369H1139V372H1140V369H1141V370H1142V370H1143V365H1144V364H1145V370H1146V367H1147V371H1148V369H1149V370H1150V366H1151V368H1152V371H1153V364H1154V358H1155V370H1156V368H1157V369H1158V369H1159V372H1160V371H1161V368H1162V367H1163V367H1164V367H1165V370H1166V371H1167V370H1168V371H1169V364H1170V365H1171V370H1172V367H1173V362H1174V372H1175V371H1176V372H1177V368H1178V371H1179V375H1180V361H1181V361H1182V370H1183V368H1184V368H1185V363H1186V368H1187V375H1188V373H1189V370H1190V362H1191V376H1192V373H1193V374H1194V374H1195V374H1196V375H1197V366H1198V376H1199V374H1200V376H1201V371H1202V375H1203V374H1204V371H1205V365H1206V369H1207V374H1208V373H1209V376H1210V376H1211V377H1212V374H1213V372H1214V374H1215V376H1216V378H1217V375H1218V373H1219V375H1220V371H1221V378H1222V376H1223V375H1224V369H1225V377H1226V379H1227V373H1228V372H1229V379H1230V373H1231V379H1232V373H1233V370H1234V379H1235V380H1236V378H1237V378H1238V378H1239V376H1240V378H1241V367H1242V367H1243V378H1244V379H1245V379H1246V376H1247V377H1248V372H1249V374H1250V377H1251V377H1252V379H1253V369H1254V379H1255V379H1256V377H1257V381H1258V380H1259V377H1260V369H1261V374H1262V372H1263V377H1264V373H1265V378H1266V377H1267V378H1268V377H1269V378H1270V481H1269V479H1268V483H1267V478H1266V479H1265V489H1264V475H1263V489H1262V477H1261V476H1260V479H1259V478H1258V484H1257V489H1256V479H1255V475H1254V476H1253V487H1252V475H1251V479H1250V476H1249V475H1248V477H1247V484H1246V480H1245V479H1244V477H1243V483H1242V477H1241V479H1240V488H1239V490H1238V479H1237V479H1236V490H1235V480H1234V480H1233V474H1232V476H1231V480H1230V477H1229V479H1228V483H1227V481H1226V481H1225V475H1224V478H1223V475H1222V479H1221V479H1220V482H1219V491H1218V482H1217V485H1216V478H1215V476H1214V474H1213V474H1212V474H1211V481H1210V482H1209V475H1208V473H1207V473H1206V478H1205V475H1204V471H1203V470H1202V471H1201V480H1200V477H1199V471H1198V476H1197V472H1196V472H1195V471H1194V484H1193V473H1192V474H1191V468H1190V473H1189V466H1188V467H1187V468H1186V468H1185V472H1184V466H1183V474H1182V466H1181V465H1180V464H1179V469H1178V469H1177V469H1176V463H1175V468H1174V469H1173V465H1172V466H1171V478H1170V464H1169V468H1168V470H1167V469H1166V462H1165V462H1164V461H1163V462H1162V472H1161V468H1160V463H1159V461H1158V458H1157V465H1156V465H1155V461H1154V461H1153V463H1152V464H1151V476H1150V466H1149V465H1148V461H1147V461H1146V464H1145V463H1144V472H1143V465H1142V464H1141V463H1140V467H1139V462H1138V461H1137V473H1136V478H1135V472H1134V463H1133V464H1132V464H1131V465H1130V464H1129V466H1128V467H1127V464H1126V472H1125V464H1124V474H1123V471H1122V466H1121V475H1120V463H1119V465H1118V467H1117V463H1116V465H1115V468H1114V468H1113V473H1112V479H1111V467H1110V468H1109V465H1108V479H1107V466H1106V482H1105V471H1104V474H1103V478H1102V474H1101V473H1100V472H1099V486H1098V473H1097V471H1096V473H1095V476H1094V471H1093V471H1092V477H1091V472H1090V470H1089V472H1088V473H1087V473H1086V473H1085V474H1084V476H1083V475H1082V485H1081V475H1080V489H1079V476H1078V478H1077V478H1076V479H1075V476H1074V476H1073V481H1072V476H1071V477H1070V481H1069V484H1068V479H1067V484H1066V477H1065V486H1064V476H1063V481H1062V476H1061V477H1060V480H1059V484H1058V483H1057V484H1056V478H1055V480H1054V482H1053V477H1052V482H1051V477H1050V490H1049V476H1048V492H1047V486H1046V482H1045V483H1044V485H1043V480H1042V478H1041V481H1040V486H1039V480H1038V476H1037V478H1036V491H1035V475H1034V476H1033V475H1032V476H1031V476H1030V474H1029V480H1028V477H1027V480H1026V475H1025V475H1024V483H1023V473H1022V473H1021V489H1020V476H1019V474H1018V480H1017V476H1016V479H1015V473H1014V472H1013V475H1012V475H1011V476H1010V477H1009V469H1008V469H1007V484H1006V468H1005V471H1004V482H1003V483H1002V472H1001V471H1000V469H999V479H998V466H997V467H996V465H995V466H994V466H993V475H992V466H991V464H990V466H989V471H988V466H987V465H986V467H985V465H984V466H983V473H982V468H981V473H980V481H979V470H978V468H977V464H976V463H975V463H974V463H973V471H972V461H971V465H970V467H969V462H968V462H967V460H966V459H965V459H964V472H963V464H962V462H961V469H960V464H959V468H958V460H957V460H956V463H955V472H954V478H953V477H952V471H951V467H950V467H949V467H948V471H947V461H946V469H945V469H944V469H943V472H942V462H941V463H940V471H939V471H938V470H937V465H936V477H935V478H934V467H933V480H932V466H931V466H930V464H929V476H928V470H927V466H926V467H925V469H924V472H923V468H922V470H921V476H920V468H919V482H918V466H917V473H916V474H915V472H914V470H913V468H912V482H911V469H910V473H909V484H908V468H907V471H906V470H905V473H904V481H903V476H902V475H901V475H900V475H899V474H898V474H897V474H896V482H895V474H894V489H893V482H892V485H891V474H890V473H889V490H888V476H887V487H886V478H885V475H884V474H883V475H882V491H881V477H880V475H879V484H878V478H877V474H876V482H875V475H874V487H873V490H872V479H871V477H870V488H869V479H868V475H867V478H866V480H865V476H864V476H863V478H862V478H861V488H860V479H859V481H858V476H857V480H856V479H855V484H854V475H853V478H852V477H851V479H850V486H849V484H848V476H847V477H846V479H845V481H844V477H843V491H842V490H841V482H840V481H839V476H838V490H837V483H836V475H835V483H834V476H833V474H832V473H831V480H830V473H829V471H828V472H827V471H826V469H825V470H824V468H823V485H822V471H821V470H820V470H819V469H818V469H817V475H816V472H815V483H814V468H813V482H812V468H811V473H810V472H809V468H808V471H807V469H806V470H805V483H804V469H803V470H802V469H801V480H800V466H799V465H798V465H797V465H796V471H795V463H794V465H793V477H792V465H791V468H790V461H789V464H788V468H787V470H786V463H785V467H784V463H783V463H782V478H781V465H780V472H779V470H778V462H777V462H776V475H775V461H774V476H773V463H772V463H771V462H770V465H769V477H768V463H767V467H766V464H765V465H764V462H763V463H762V477H761V467H760V471H759V461H758V463H757V463H756V469H755V464H754V463H753V462H752V471H751V463H750V467H749V468H748V462H747V462H746V468H745V468H744V470H743V471H742V464H741V475H740V475H739V469H738V469H737V478H736V475H735V480H734V471H733V467H732V466H731V470H730V470H729V480H728V471H727V468H726V470H725V470H724V472H723V484H722V469H721V468H720V469H719V469H718V470H717V484H716V473H715V480H714V477H713V474H712V476H711V473H710V485H709V473H708V475H707V477H706V479H705V481H704V475H703V476H702V484H701V478H700V482H699V481H698V478H697V479H696V479H695V476H694V486H693V476H692V487H691V492H690V481H689V485H688V476H687V477H686V476H685V483H684V477H683V477H682V476H681V484H680V490H679V485H678V481H677V481H676V477H675V478H674V482H673V477H672V479H671V477H670V481H669V489H668V476H667V481H666V479H665V491H664V477H663V478H662V481H661V489H660V477H659V478H658V492H657V484H656V475H655V477H654V474H653V483H652V477H651V478H650V476H649V476H648V474H647V475H646V484H645V484H644V471H643V482H642V478H641V473H640V478H639V480H638V478H637V473H636V486H635V473H634V475H633V477H632V471H631V471H630V486H629V483H628V472H627V475H626V471H625V470H624V469H623V471H622V471H621V476H620V477H619V466H618V479H617V465H616V467H615V464H614V467H613V471H612V477H611V465H610V470H609V470H608V463H607V466H606V467H605V466H604V467H603V477H602V464H601V463H600V473H599V471H598V462H597V464H596V473H595V463H594V468H593V463H592V466H591V473H590V468H589V468H588V463H587V462H586V467H585V474H584V463H583V470H582V460H581V467H580V459H579V460H578V463H577V459H576V461H575V476H574V467H573V469H572V462H571V467H570V462H569V477H568V463H567V465H566V470H565V463H564V462H563V473H562V464H561V465H560V466H559V462H558V463H557V471H556V468H555V470H554V466H553V472H552V468H551V472H550V470H549V469H548V468H547V467H546V467H545V467H544V465H543V468H542V470H541V466H540V467H539V476H538V468H537V474H536V468H535V469H534V480H533V482H532V472H531V472H530V473H529V473H528V472H527V485H526V472H525V479H524V477H523V487H522V473H521V471H520V474H519V485H518V489H517V489H516V477H515V476H514V473H513V474H512V474H511V476H510V478H509V476H508V477H507V477H506V486H505V479H504V476H503V491H502V481H501V480H500V485H499V477H498V478H497V491H496V487H495V486H494V480H493V478H492V481H491V483H490V482H489V479H488V480H487V477H486V476H485V480H484V481H483V477H482V478H481V479H480V476H479V482H478V481H477V480H476V486H475V479H474V478H473V483H472V476H471V473H470V477H469V481H468V476H467V476H466V477H465V477H464V477H463V491H462V480H461V490H460V481H459V475H458V476H457V480H456V476H455V474H454V475H453V474H452V475H451V473H450V477H449V477H448V477H447V477H446V473H445V470H444V476H443V475H442V478H441V480H440V470H439V474H438V473H437V468H436V467H435V470H434V469H433V472H432V468H431V469H430V481H429V478H428V468H427V467H426V467H425V472H424V465H423V466H422V470H421V471H420V480H419V470H418V465H417V475H416V471H415V463H414V463H413V474H412V464H411V467H410V476H409V463H408V463H407V470H406V463H405V463H404V477H403V474H402V464H401V464H400V465H399V461H398V470H397V462H396V464H395V460H394V468H393V477H392V470H391V462H390V471H389V462H388V462H387V460H386V463H385V469H384V466H383V462H382V469H381V476H380V466H379V462H378V463H377V468H376V460H375V465H374V463H373V460H372V461H371V470H370V465H369V462H368V462H367V464H366V467H365V466H364V464H363V463H362V463H361V480H360V466H359V467H358V474H357V477H356V466H355V466H354V466H353V468H352V470H351V469H350V475H349V469H348V472H347V471H346V472H345V473H344V469H343V469H342V485H341V478H340V472H339V473H338V478H337V477H336V483H335V480H334V472H333V472H332V477H331V472H330V472H329V478H328V483H327V475H326V473H325V475H324V484H323V487H322V473H321V482H320V490H319V477H318V475H317V478H316V480H315V480H314V487H313V481H312V483H311V477H310V477H309V477H308V478H307V479H306V484H305V483H304V478H303V493H302V485H301V493H300V480H299V479H298V484H297V478H296V485H295V491H294V485H293V492H292V486H291V480H290V482H289V478H288V478H287V484H286V481H285V476H284V480H283V480H282V488H281V477H280V479H279V478H278V484H277V482H276V478H275V475H274V479H273V474H272V477H271V473H270V484H269V472H268V474H267V474H266V474H265V474H264V473H263V488H262V479H261V473H260V478H259V478H258V470H257V470H256V477H255V484H254V469H253V469H252V484H251V484H250V469H249V475H248V478H247V473H246V470H245V467H244V469H243V467H242V466H241V467H240V468H239V469H238V466H237V465H236V465H235V480H234V467H233V466H232V477H231V472H230V466H229V471H228V466H227V474H226V481H225V468H224V466H223V471H222V463H221V463H220V462H219V466H218V461H217V478H216V461H215V463H214V463H213V462H212V462H211V477H210V464H209V462H208V462H207V460H206V460H205V460H204V477H203V461H202V464H201V467H200V471H199V462H198V472H197V469H196V470H195V468H194V463H193V476H192V465H191V462H190V462H189V462H188V464H187V461H186V470H185V469H184V468H183V465H182V469H181V462H180V465H179V472H178V461H177V466H176V463H175V471H174V466H173V477H172V469H171V466H170V482H169V473H168V468H167V481H166V466H165V479H164V482H163V474H162V475H161V473H160V477H159V468H158V479H157V474H156V477H155V471H154V471H153V477H152V469H151V472H150V476H149V469H148V479H147V474H146V470H145V475H144V472H143V469H142V475H141V470H140V470H139V471H138V473H137V472H136V473H135V476H134V480H133V479H132V474H131V481H130V476H129V477H128V481H127V474H126V476H125V482H124V477H123V479H122V485H121V475H120V478H119V492H118V476H117V487H116V481H115V480H114V481H113V484H112V486H111V481H110V494H109V480H108V495H107V483H106V480H105V478H104V493H103V477H102V478H101V481H100V481H99V483H98V480H97V482H96V482H95V478H94V485H93V479H92V477H91V475H90V480H89V478H88V475H87V481H86V482H85V474H84V476H83V475H82V474H81V476H80V473H79V474H78V474H77V474H76V472H75V472H74V477H73V473H72V472H71V480H70Z"/></clipPath>
<linearGradient id="prof1" x1="0" y1="0" x2="0" y2="1"><stop offset="0.0000" stop-color="#086a8a"/><stop offset="0.1328" stop-color="#0a76a0"/><stop offset="0.2188" stop-color="#0d86b0"/><stop offset="0.3438" stop-color="#1090bc"/><stop offset="0.5000" stop-color="#1290be"/><stop offset="0.6562" stop-color="#1088b4"/><stop offset="0.7812" stop-color="#0d80aa"/><stop offset="0.8750" stop-color="#0b76a0"/><stop offset="1.0000" stop-color="#096a8e"/></linearGradient>
<linearGradient id="sprof1" x1="0" y1="0" x2="0" y2="1"><stop offset="0.0000" stop-color="#18c2f6" stop-opacity="0"/><stop offset="0.2927" stop-color="#18c2f6" stop-opacity="0.75"/><stop offset="0.5122" stop-color="#18c2f6" stop-opacity="0.85"/><stop offset="0.7073" stop-color="#18c2f6" stop-opacity="0.75"/><stop offset="1.0000" stop-color="#18c2f6" stop-opacity="0"/></linearGradient>
<g clip-path="url(#clip1)"><g filter="url(#wf1)"><g fill="url(#prof1)"><rect x="70" y="360.8" width="3" height="128"/><rect x="73" y="361.4" width="3" height="128"/><rect x="76" y="361.9" width="3" height="128"/><rect x="79" y="362.4" width="3" height="128"/><rect x="82" y="362.8" width="3" height="128"/><rect x="85" y="363.2" width="3" height="128"/><rect x="88" y="363.6" width="3" height="128"/><rect x="91" y="363.9" width="3" height="128"/><rect x="94" y="364.1" width="3" height="128"/><rect x="97" y="364.3" width="3" height="128"/><rect x="100" y="364.4" width="3" height="128"/><rect x="103" y="364.5" width="3" height="128"/><rect x="106" y="364.5" width="3" height="128"/><rect x="109" y="364.4" width="3" height="128"/><rect x="112" y="364.3" width="3" height="128"/><rect x="115" y="364.1" width="3" height="128"/><rect x="118" y="363.9" width="3" height="128"/><rect x="121" y="363.6" width="3" height="128"/><rect x="124" y="363.2" width="3" height="128"/><rect x="127" y="362.8" width="3" height="128"/><rect x="130" y="362.4" width="3" height="128"/><rect x="133" y="361.9" width="3" height="128"/><rect x="136" y="361.4" width="3" height="128"/><rect x="139" y="360.8" width="3" height="128"/><rect x="142" y="360.2" width="3" height="128"/><rect x="145" y="359.6" width="3" height="128"/><rect x="148" y="359.0" width="3" height="128"/><rect x="151" y="358.4" width="3" height="128"/><rect x="154" y="357.8" width="3" height="128"/><rect x="157" y="357.2" width="3" height="128"/><rect x="160" y="356.6" width="3" height="128"/><rect x="163" y="356.0" width="3" height="128"/><rect x="166" y="355.4" width="3" height="128"/><rect x="169" y="354.9" width="3" height="128"/><rect x="172" y="354.4" width="3" height="128"/><rect x="175" y="353.9" width="3" height="128"/><rect x="178" y="353.5" width="3" height="128"/><rect x="181" y="353.1" width="3" height="128"/><rect x="184" y="352.8" width="3" height="128"/><rect x="187" y="352.5" width="3" height="128"/><rect x="190" y="352.3" width="3" height="128"/><rect x="193" y="352.1" width="3" height="128"/><rect x="196" y="352.0" width="3" height="128"/><rect x="199" y="352.0" width="3" height="128"/><rect x="202" y="352.0" width="3" height="128"/><rect x="205" y="352.1" width="3" height="128"/><rect x="208" y="352.3" width="3" height="128"/><rect x="211" y="352.5" width="3" height="128"/><rect x="214" y="352.8" width="3" height="128"/><rect x="217" y="353.1" width="3" height="128"/><rect x="220" y="353.5" width="3" height="128"/><rect x="223" y="353.9" width="3" height="128"/><rect x="226" y="354.4" width="3" height="128"/><rect x="229" y="354.9" width="3" height="128"/><rect x="232" y="355.4" width="3" height="128"/><rect x="235" y="356.0" width="3" height="128"/><rect x="238" y="356.6" width="3" height="128"/><rect x="241" y="357.2" width="3" height="128"/><rect x="244" y="357.8" width="3" height="128"/><rect x="247" y="358.4" width="3" height="128"/><rect x="250" y="359.0" width="3" height="128"/><rect x="253" y="359.6" width="3" height="128"/><rect x="256" y="360.2" width="3" height="128"/><rect x="259" y="360.8" width="3" height="128"/><rect x="262" y="361.4" width="3" height="128"/><rect x="265" y="361.9" width="3" height="128"/><rect x="268" y="362.4" width="3" height="128"/><rect x="271" y="362.8" width="3" height="128"/><rect x="274" y="363.2" width="3" height="128"/><rect x="277" y="363.6" width="3" height="128"/><rect x="280" y="363.9" width="3" height="128"/><rect x="283" y="364.1" width="3" height="128"/><rect x="286" y="364.3" width="3" height="128"/><rect x="289" y="364.4" width="3" height="128"/><rect x="292" y="364.5" width="3" height="128"/><rect x="295" y="364.5" width="3" height="128"/><rect x="298" y="364.4" width="3" height="128"/><rect x="301" y="364.3" width="3" height="128"/><rect x="304" y="364.1" width="3" height="128"/><rect x="307" y="363.9" width="3" height="128"/><rect x="310" y="363.6" width="3" height="128"/><rect x="313" y="363.2" width="3" height="128"/><rect x="316" y="362.8" width="3" height="128"/><rect x="319" y="362.4" width="3" height="128"/><rect x="322" y="361.9" width="3" height="128"/><rect x="325" y="361.4" width="3" height="128"/><rect x="328" y="360.8" width="3" height="128"/><rect x="331" y="360.2" width="3" height="128"/><rect x="334" y="359.6" width="3" height="128"/><rect x="337" y="359.0" width="3" height="128"/><rect x="340" y="358.4" width="3" height="128"/><rect x="343" y="357.8" width="3" height="128"/><rect x="346" y="357.2" width="3" height="128"/><rect x="349" y="356.6" width="3" height="128"/><rect x="352" y="356.0" width="3" height="128"/><rect x="355" y="355.4" width="3" height="128"/><rect x="358" y="354.9" width="3" height="128"/><rect x="361" y="354.4" width="3" height="128"/><rect x="364" y="353.9" width="3" height="128"/><rect x="367" y="353.5" width="3" height="128"/><rect x="370" y="353.1" width="3" height="128"/><rect x="373" y="352.8" width="3" height="128"/><rect x="376" y="352.5" width="3" height="128"/><rect x="379" y="352.3" width="3" height="128"/><rect x="382" y="352.1" width="3" height="128"/><rect x="385" y="352.0" width="3" height="128"/><rect x="388" y="352.0" width="3" height="128"/><rect x="391" y="352.0" width="3" height="128"/><rect x="394" y="352.1" width="3" height="128"/><rect x="397" y="352.3" width="3" height="128"/><rect x="400" y="352.5" width="3" height="128"/><rect x="403" y="352.8" width="3" height="128"/><rect x="406" y="353.1" width="3" height="128"/><rect x="409" y="353.5" width="3" height="128"/><rect x="412" y="353.9" width="3" height="128"/><rect x="415" y="354.4" width="3" height="128"/><rect x="418" y="354.9" width="3" height="128"/><rect x="421" y="355.4" width="3" height="128"/><rect x="424" y="356.0" width="3" height="128"/><rect x="427" y="356.6" width="3" height="128"/><rect x="430" y="357.2" width="3" height="128"/><rect x="433" y="357.8" width="3" height="128"/><rect x="436" y="358.4" width="3" height="128"/><rect x="439" y="359.0" width="3" height="128"/><rect x="442" y="359.6" width="3" height="128"/><rect x="445" y="360.2" width="3" height="128"/><rect x="448" y="360.8" width="3" height="128"/><rect x="451" y="361.4" width="3" height="128"/><rect x="454" y="361.9" width="3" height="128"/><rect x="457" y="362.4" width="3" height="128"/><rect x="460" y="362.8" width="3" height="128"/><rect x="463" y="363.2" width="3" height="128"/><rect x="466" y="363.6" width="3" height="128"/><rect x="469" y="363.9" width="3" height="128"/><rect x="472" y="364.1" width="3" height="128"/><rect x="475" y="364.3" width="3" height="128"/><rect x="478" y="364.4" width="3" height="128"/><rect x="481" y="364.5" width="3" height="128"/><rect x="484" y="364.5" width="3" height="128"/><rect x="487" y="364.4" width="3" height="128"/><rect x="490" y="364.3" width="3" height="128"/><rect x="493" y="364.1" width="3" height="128"/><rect x="496" y="363.9" width="3" height="128"/><rect x="499" y="363.6" width="3" height="128"/><rect x="502" y="363.2" width="3" height="128"/><rect x="505" y="362.8" width="3" height="128"/><rect x="508" y="362.4" width="3" height="128"/><rect x="511" y="361.9" width="3" height="128"/><rect x="514" y="361.4" width="3" height="128"/><rect x="517" y="360.8" width="3" height="128"/><rect x="520" y="360.2" width="3" height="128"/><rect x="523" y="359.6" width="3" height="128"/><rect x="526" y="359.0" width="3" height="128"/><rect x="529" y="358.4" width="3" height="128"/><rect x="532" y="357.8" width="3" height="128"/><rect x="535" y="357.2" width="3" height="128"/><rect x="538" y="356.6" width="3" height="128"/><rect x="541" y="356.0" width="3" height="128"/><rect x="544" y="355.4" width="3" height="128"/><rect x="547" y="354.9" width="3" height="128"/><rect x="550" y="354.4" width="3" height="128"/><rect x="553" y="353.9" width="3" height="128"/><rect x="556" y="353.5" width="3" height="128"/><rect x="559" y="353.1" width="3" height="128"/><rect x="562" y="352.8" width="3" height="128"/><rect x="565" y="352.5" width="3" height="128"/><rect x="568" y="352.3" width="3" height="128"/><rect x="571" y="352.1" width="3" height="128"/><rect x="574" y="352.0" width="3" height="128"/><rect x="577" y="352.0" width="3" height="128"/><rect x="580" y="352.0" width="3" height="128"/><rect x="583" y="352.1" width="3" height="128"/><rect x="586" y="352.3" width="3" height="128"/><rect x="589" y="352.5" width="3" height="128"/><rect x="592" y="352.8" width="3" height="128"/><rect x="595" y="353.1" width="3" height="128"/><rect x="598" y="353.5" width="3" height="128"/><rect x="601" y="353.9" width="3" height="128"/><rect x="604" y="354.4" width="3" height="128"/><rect x="607" y="354.9" width="3" height="128"/><rect x="610" y="355.4" width="3" height="128"/><rect x="613" y="356.0" width="3" height="128"/><rect x="616" y="356.6" width="3" height="128"/><rect x="619" y="357.2" width="3" height="128"/><rect x="622" y="357.8" width="3" height="128"/><rect x="625" y="358.4" width="3" height="128"/><rect x="628" y="359.0" width="3" height="128"/><rect x="631" y="359.6" width="3" height="128"/><rect x="634" y="360.2" width="3" height="128"/><rect x="637" y="360.8" width="3" height="128"/><rect x="640" y="361.4" width="3" height="128"/><rect x="643" y="361.9" width="3" height="128"/><rect x="646" y="362.4" width="3" height="128"/><rect x="649" y="362.8" width="3" height="128"/><rect x="652" y="363.2" width="3" height="128"/><rect x="655" y="363.6" width="3" height="128"/><rect x="658" y="363.9" width="3" height="128"/><rect x="661" y="364.1" width="3" height="128"/><rect x="664" y="364.3" width="3" height="128"/><rect x="667" y="364.4" width="3" height="128"/><rect x="670" y="364.5" width="3" height="128"/><rect x="673" y="364.5" width="3" height="128"/><rect x="676" y="364.4" width="3" height="128"/><rect x="679" y="364.3" width="3" height="128"/><rect x="682" y="364.1" width="3" height="128"/><rect x="685" y="363.9" width="3" height="128"/><rect x="688" y="363.6" width="3" height="128"/><rect x="691" y="363.2" width="3" height="128"/><rect x="694" y="362.8" width="3" height="128"/><rect x="697" y="362.4" width="3" height="128"/><rect x="700" y="361.9" width="3" height="128"/><rect x="703" y="361.4" width="3" height="128"/><rect x="706" y="360.8" width="3" height="128"/><rect x="709" y="360.2" width="3" height="128"/><rect x="712" y="359.6" width="3" height="128"/><rect x="715" y="359.0" width="3" height="128"/><rect x="718" y="358.4" width="3" height="128"/><rect x="721" y="357.8" width="3" height="128"/><rect x="724" y="357.2" width="3" height="128"/><rect x="727" y="356.6" width="3" height="128"/><rect x="730" y="356.0" width="3" height="128"/><rect x="733" y="355.4" width="3" height="128"/><rect x="736" y="354.9" width="3" height="128"/><rect x="739" y="354.4" width="3" height="128"/><rect x="742" y="353.9" width="3" height="128"/><rect x="745" y="353.5" width="3" height="128"/><rect x="748" y="353.1" width="3" height="128"/><rect x="751" y="352.8" width="3" height="128"/><rect x="754" y="352.5" width="3" height="128"/><rect x="757" y="352.3" width="3" height="128"/><rect x="760" y="352.1" width="3" height="128"/><rect x="763" y="352.0" width="3" height="128"/><rect x="766" y="352.0" width="3" height="128"/><rect x="769" y="352.0" width="3" height="128"/><rect x="772" y="352.1" width="3" height="128"/><rect x="775" y="352.3" width="3" height="128"/><rect x="778" y="352.5" width="3" height="128"/><rect x="781" y="352.8" width="3" height="128"/><rect x="784" y="353.1" width="3" height="128"/><rect x="787" y="353.5" width="3" height="128"/><rect x="790" y="353.9" width="3" height="128"/><rect x="793" y="354.4" width="3" height="128"/><rect x="796" y="354.9" width="3" height="128"/><rect x="799" y="355.4" width="3" height="128"/><rect x="802" y="356.0" width="3" height="128"/><rect x="805" y="356.6" width="3" height="128"/><rect x="808" y="357.2" width="3" height="128"/><rect x="811" y="357.8" width="3" height="128"/><rect x="814" y="358.4" width="3" height="128"/><rect x="817" y="359.0" width="3" height="128"/><rect x="820" y="359.6" width="3" height="128"/><rect x="823" y="360.2" width="3" height="128"/><rect x="826" y="360.8" width="3" height="128"/><rect x="829" y="361.4" width="3" height="128"/><rect x="832" y="361.9" width="3" height="128"/><rect x="835" y="362.4" width="3" height="128"/><rect x="838" y="362.8" width="3" height="128"/><rect x="841" y="363.2" width="3" height="128"/><rect x="844" y="363.6" width="3" height="128"/><rect x="847" y="363.9" width="3" height="128"/><rect x="850" y="364.1" width="3" height="128"/><rect x="853" y="364.3" width="3" height="128"/><rect x="856" y="364.4" width="3" height="128"/><rect x="859" y="364.5" width="3" height="128"/><rect x="862" y="364.5" width="3" height="128"/><rect x="865" y="364.4" width="3" height="128"/><rect x="868" y="364.3" width="3" height="128"/><rect x="871" y="364.1" width="3" height="128"/><rect x="874" y="363.9" width="3" height="128"/><rect x="877" y="363.6" width="3" height="128"/><rect x="880" y="363.2" width="3" height="128"/><rect x="883" y="362.8" width="3" height="128"/><rect x="886" y="362.4" width="3" height="128"/><rect x="889" y="361.9" width="3" height="128"/><rect x="892" y="361.4" width="3" height="128"/><rect x="895" y="360.8" width="3" height="128"/><rect x="898" y="360.2" width="3" height="128"/><rect x="901" y="359.6" width="3" height="128"/><rect x="904" y="359.0" width="3" height="128"/><rect x="907" y="358.4" width="3" height="128"/><rect x="910" y="357.8" width="3" height="128"/><rect x="913" y="357.2" width="3" height="128"/><rect x="916" y="356.6" width="3" height="128"/><rect x="919" y="356.0" width="3" height="128"/><rect x="922" y="355.4" width="3" height="128"/><rect x="925" y="354.9" width="3" height="128"/><rect x="928" y="354.4" width="3" height="128"/><rect x="931" y="353.9" width="3" height="128"/><rect x="934" y="353.5" width="3" height="128"/><rect x="937" y="353.1" width="3" height="128"/><rect x="940" y="352.8" width="3" height="128"/><rect x="943" y="352.5" width="3" height="128"/><rect x="946" y="352.3" width="3" height="128"/><rect x="949" y="352.1" width="3" height="128"/><rect x="952" y="352.0" width="3" height="128"/><rect x="955" y="352.0" width="3" height="128"/><rect x="958" y="352.0" width="3" height="128"/><rect x="961" y="352.1" width="3" height="128"/><rect x="964" y="352.3" width="3" height="128"/><rect x="967" y="352.5" width="3" height="128"/><rect x="970" y="352.8" width="3" height="128"/><rect x="973" y="353.1" width="3" height="128"/><rect x="976" y="353.5" width="3" height="128"/><rect x="979" y="353.9" width="3" height="128"/><rect x="982" y="354.4" width="3" height="128"/><rect x="985" y="354.9" width="3" height="128"/><rect x="988" y="355.4" width="3" height="128"/><rect x="991" y="356.0" width="3" height="128"/><rect x="994" y="356.6" width="3" height="128"/><rect x="997" y="357.2" width="3" height="128"/><rect x="1000" y="357.8" width="3" height="128"/><rect x="1003" y="358.4" width="3" height="128"/><rect x="1006" y="359.0" width="3" height="128"/><rect x="1009" y="359.6" width="3" height="128"/><rect x="1012" y="360.2" width="3" height="128"/><rect x="1015" y="360.8" width="3" height="128"/><rect x="1018" y="361.4" width="3" height="128"/><rect x="1021" y="361.9" width="3" height="128"/><rect x="1024" y="362.4" width="3" height="128"/><rect x="1027" y="362.8" width="3" height="128"/><rect x="1030" y="363.2" width="3" height="128"/><rect x="1033" y="363.6" width="3" height="128"/><rect x="1036" y="363.9" width="3" height="128"/><rect x="1039" y="364.1" width="3" height="128"/><rect x="1042" y="364.3" width="3" height="128"/><rect x="1045" y="364.4" width="3" height="128"/><rect x="1048" y="364.5" width="3" height="128"/><rect x="1051" y="364.5" width="3" height="128"/><rect x="1054" y="364.4" width="3" height="128"/><rect x="1057" y="364.3" width="3" height="128"/><rect x="1060" y="364.1" width="3" height="128"/><rect x="1063" y="363.9" width="3" height="128"/><rect x="1066" y="363.6" width="3" height="128"/><rect x="1069" y="363.2" width="3" height="128"/><rect x="1072" y="362.8" width="3" height="128"/><rect x="1075" y="362.4" width="3" height="128"/><rect x="1078" y="361.9" width="3" height="128"/><rect x="1081" y="361.4" width="3" height="128"/><rect x="1084" y="360.8" width="3" height="128"/><rect x="1087" y="360.2" width="3" height="128"/><rect x="1090" y="359.6" width="3" height="128"/><rect x="1093" y="359.0" width="3" height="128"/><rect x="1096" y="358.4" width="3" height="128"/><rect x="1099" y="357.8" width="3" height="128"/><rect x="1102" y="357.2" width="3" height="128"/><rect x="1105" y="356.6" width="3" height="128"/><rect x="1108" y="356.0" width="3" height="128"/><rect x="1111" y="355.4" width="3" height="128"/><rect x="1114" y="354.9" width="3" height="128"/><rect x="1117" y="354.4" width="3" height="128"/><rect x="1120" y="353.9" width="3" height="128"/><rect x="1123" y="353.5" width="3" height="128"/><rect x="1126" y="353.1" width="3" height="128"/><rect x="1129" y="352.8" width="3" height="128"/><rect x="1132" y="352.5" width="3" height="128"/><rect x="1135" y="352.3" width="3" height="128"/><rect x="1138" y="352.1" width="3" height="128"/><rect x="1141" y="352.0" width="3" height="128"/><rect x="1144" y="352.0" width="3" height="128"/><rect x="1147" y="352.0" width="3" height="128"/><rect x="1150" y="352.1" width="3" height="128"/><rect x="1153" y="352.3" width="3" height="128"/><rect x="1156" y="352.5" width="3" height="128"/><rect x="1159" y="352.8" width="3" height="128"/><rect x="1162" y="353.1" width="3" height="128"/><rect x="1165" y="353.5" width="3" height="128"/><rect x="1168" y="353.9" width="3" height="128"/><rect x="1171" y="354.4" width="3" height="128"/><rect x="1174" y="354.9" width="3" height="128"/><rect x="1177" y="355.4" width="3" height="128"/><rect x="1180" y="356.0" width="3" height="128"/><rect x="1183" y="356.6" width="3" height="128"/><rect x="1186" y="357.2" width="3" height="128"/><rect x="1189" y="357.8" width="3" height="128"/><rect x="1192" y="358.4" width="3" height="128"/><rect x="1195" y="359.0" width="3" height="128"/><rect x="1198" y="359.6" width="3" height="128"/><rect x="1201" y="360.2" width="3" height="128"/><rect x="1204" y="360.8" width="3" height="128"/><rect x="1207" y="361.4" width="3" height="128"/><rect x="1210" y="361.9" width="3" height="128"/><rect x="1213" y="362.4" width="3" height="128"/><rect x="1216" y="362.8" width="3" height="128"/><rect x="1219" y="363.2" width="3" height="128"/><rect x="1222" y="363.6" width="3" height="128"/><rect x="1225" y="363.9" width="3" height="128"/><rect x="1228" y="364.1" width="3" height="128"/><rect x="1231" y="364.3" width="3" height="128"/><rect x="1234" y="364.4" width="3" height="128"/><rect x="1237" y="364.5" width="3" height="128"/><rect x="1240" y="364.5" width="3" height="128"/><rect x="1243" y="364.4" width="3" height="128"/><rect x="1246" y="364.3" width="3" height="128"/><rect x="1249" y="364.1" width="3" height="128"/><rect x="1252" y="363.9" width="3" height="128"/><rect x="1255" y="363.6" width="3" height="128"/><rect x="1258" y="363.2" width="3" height="128"/><rect x="1261" y="362.8" width="3" height="128"/><rect x="1264" y="362.4" width="3" height="128"/><rect x="1267" y="361.9" width="3" height="128"/></g><g fill="url(#sprof1)"><rect x="70" y="386.9" width="3" height="41"/><rect x="73" y="387.5" width="3" height="41"/><rect x="76" y="388.1" width="3" height="41"/><rect x="79" y="388.6" width="3" height="41"/><rect x="82" y="389.1" width="3" height="41"/><rect x="85" y="389.6" width="3" height="41"/><rect x="88" y="390.0" width="3" height="41"/><rect x="91" y="390.3" width="3" height="41"/><rect x="94" y="390.6" width="3" height="41"/><rect x="97" y="390.8" width="3" height="41"/><rect x="100" y="390.9" width="3" height="41"/><rect x="103" y="391.0" width="3" height="41"/><rect x="106" y="391.0" width="3" height="41"/><rect x="109" y="390.9" width="3" height="41"/><rect x="112" y="390.8" width="3" height="41"/><rect x="115" y="390.6" width="3" height="41"/><rect x="118" y="390.3" width="3" height="41"/><rect x="121" y="390.0" width="3" height="41"/><rect x="124" y="389.6" width="3" height="41"/><rect x="127" y="389.1" width="3" height="41"/><rect x="130" y="388.6" width="3" height="41"/><rect x="133" y="388.1" width="3" height="41"/><rect x="136" y="387.5" width="3" height="41"/><rect x="139" y="386.9" width="3" height="41"/><rect x="142" y="386.2" width="3" height="41"/><rect x="145" y="385.6" width="3" height="41"/><rect x="148" y="384.9" width="3" height="41"/><rect x="151" y="384.2" width="3" height="41"/><rect x="154" y="383.5" width="3" height="41"/><rect x="157" y="382.8" width="3" height="41"/><rect x="160" y="382.1" width="3" height="41"/><rect x="163" y="381.4" width="3" height="41"/><rect x="166" y="380.8" width="3" height="41"/><rect x="169" y="380.2" width="3" height="41"/><rect x="172" y="379.6" width="3" height="41"/><rect x="175" y="379.1" width="3" height="41"/><rect x="178" y="378.6" width="3" height="41"/><rect x="181" y="378.2" width="3" height="41"/><rect x="184" y="377.9" width="3" height="41"/><rect x="187" y="377.5" width="3" height="41"/><rect x="190" y="377.3" width="3" height="41"/><rect x="193" y="377.1" width="3" height="41"/><rect x="196" y="377.0" width="3" height="41"/><rect x="199" y="377.0" width="3" height="41"/><rect x="202" y="377.0" width="3" height="41"/><rect x="205" y="377.1" width="3" height="41"/><rect x="208" y="377.3" width="3" height="41"/><rect x="211" y="377.5" width="3" height="41"/><rect x="214" y="377.9" width="3" height="41"/><rect x="217" y="378.2" width="3" height="41"/><rect x="220" y="378.6" width="3" height="41"/><rect x="223" y="379.1" width="3" height="41"/><rect x="226" y="379.6" width="3" height="41"/><rect x="229" y="380.2" width="3" height="41"/><rect x="232" y="380.8" width="3" height="41"/><rect x="235" y="381.4" width="3" height="41"/><rect x="238" y="382.1" width="3" height="41"/><rect x="241" y="382.8" width="3" height="41"/><rect x="244" y="383.5" width="3" height="41"/><rect x="247" y="384.2" width="3" height="41"/><rect x="250" y="384.9" width="3" height="41"/><rect x="253" y="385.6" width="3" height="41"/><rect x="256" y="386.2" width="3" height="41"/><rect x="259" y="386.9" width="3" height="41"/><rect x="262" y="387.5" width="3" height="41"/><rect x="265" y="388.1" width="3" height="41"/><rect x="268" y="388.6" width="3" height="41"/><rect x="271" y="389.1" width="3" height="41"/><rect x="274" y="389.6" width="3" height="41"/><rect x="277" y="390.0" width="3" height="41"/><rect x="280" y="390.3" width="3" height="41"/><rect x="283" y="390.6" width="3" height="41"/><rect x="286" y="390.8" width="3" height="41"/><rect x="289" y="390.9" width="3" height="41"/><rect x="292" y="391.0" width="3" height="41"/><rect x="295" y="391.0" width="3" height="41"/><rect x="298" y="390.9" width="3" height="41"/><rect x="301" y="390.8" width="3" height="41"/><rect x="304" y="390.6" width="3" height="41"/><rect x="307" y="390.3" width="3" height="41"/><rect x="310" y="390.0" width="3" height="41"/><rect x="313" y="389.6" width="3" height="41"/><rect x="316" y="389.1" width="3" height="41"/><rect x="319" y="388.6" width="3" height="41"/><rect x="322" y="388.1" width="3" height="41"/><rect x="325" y="387.5" width="3" height="41"/><rect x="328" y="386.9" width="3" height="41"/><rect x="331" y="386.2" width="3" height="41"/><rect x="334" y="385.6" width="3" height="41"/><rect x="337" y="384.9" width="3" height="41"/><rect x="340" y="384.2" width="3" height="41"/><rect x="343" y="383.5" width="3" height="41"/><rect x="346" y="382.8" width="3" height="41"/><rect x="349" y="382.1" width="3" height="41"/><rect x="352" y="381.4" width="3" height="41"/><rect x="355" y="380.8" width="3" height="41"/><rect x="358" y="380.2" width="3" height="41"/><rect x="361" y="379.6" width="3" height="41"/><rect x="364" y="379.1" width="3" height="41"/><rect x="367" y="378.6" width="3" height="41"/><rect x="370" y="378.2" width="3" height="41"/><rect x="373" y="377.9" width="3" height="41"/><rect x="376" y="377.5" width="3" height="41"/><rect x="379" y="377.3" width="3" height="41"/><rect x="382" y="377.1" width="3" height="41"/><rect x="385" y="377.0" width="3" height="41"/><rect x="388" y="377.0" width="3" height="41"/><rect x="391" y="377.0" width="3" height="41"/><rect x="394" y="377.1" width="3" height="41"/><rect x="397" y="377.3" width="3" height="41"/><rect x="400" y="377.5" width="3" height="41"/><rect x="403" y="377.9" width="3" height="41"/><rect x="406" y="378.2" width="3" height="41"/><rect x="409" y="378.6" width="3" height="41"/><rect x="412" y="379.1" width="3" height="41"/><rect x="415" y="379.6" width="3" height="41"/><rect x="418" y="380.2" width="3" height="41"/><rect x="421" y="380.8" width="3" height="41"/><rect x="424" y="381.4" width="3" height="41"/><rect x="427" y="382.1" width="3" height="41"/><rect x="430" y="382.8" width="3" height="41"/><rect x="433" y="383.5" width="3" height="41"/><rect x="436" y="384.2" width="3" height="41"/><rect x="439" y="384.9" width="3" height="41"/><rect x="442" y="385.6" width="3" height="41"/><rect x="445" y="386.2" width="3" height="41"/><rect x="448" y="386.9" width="3" height="41"/><rect x="451" y="387.5" width="3" height="41"/><rect x="454" y="388.1" width="3" height="41"/><rect x="457" y="388.6" width="3" height="41"/><rect x="460" y="389.1" width="3" height="41"/><rect x="463" y="389.6" width="3" height="41"/><rect x="466" y="390.0" width="3" height="41"/><rect x="469" y="390.3" width="3" height="41"/><rect x="472" y="390.6" width="3" height="41"/><rect x="475" y="390.8" width="3" height="41"/><rect x="478" y="390.9" width="3" height="41"/><rect x="481" y="391.0" width="3" height="41"/><rect x="484" y="391.0" width="3" height="41"/><rect x="487" y="390.9" width="3" height="41"/><rect x="490" y="390.8" width="3" height="41"/><rect x="493" y="390.6" width="3" height="41"/><rect x="496" y="390.3" width="3" height="41"/><rect x="499" y="390.0" width="3" height="41"/><rect x="502" y="389.6" width="3" height="41"/><rect x="505" y="389.1" width="3" height="41"/><rect x="508" y="388.6" width="3" height="41"/><rect x="511" y="388.1" width="3" height="41"/><rect x="514" y="387.5" width="3" height="41"/><rect x="517" y="386.9" width="3" height="41"/><rect x="520" y="386.2" width="3" height="41"/><rect x="523" y="385.6" width="3" height="41"/><rect x="526" y="384.9" width="3" height="41"/><rect x="529" y="384.2" width="3" height="41"/><rect x="532" y="383.5" width="3" height="41"/><rect x="535" y="382.8" width="3" height="41"/><rect x="538" y="382.1" width="3" height="41"/><rect x="541" y="381.4" width="3" height="41"/><rect x="544" y="380.8" width="3" height="41"/><rect x="547" y="380.2" width="3" height="41"/><rect x="550" y="379.6" width="3" height="41"/><rect x="553" y="379.1" width="3" height="41"/><rect x="556" y="378.6" width="3" height="41"/><rect x="559" y="378.2" width="3" height="41"/><rect x="562" y="377.9" width="3" height="41"/><rect x="565" y="377.5" width="3" height="41"/><rect x="568" y="377.3" width="3" height="41"/><rect x="571" y="377.1" width="3" height="41"/><rect x="574" y="377.0" width="3" height="41"/><rect x="577" y="377.0" width="3" height="41"/><rect x="580" y="377.0" width="3" height="41"/><rect x="583" y="377.1" width="3" height="41"/><rect x="586" y="377.3" width="3" height="41"/><rect x="589" y="377.5" width="3" height="41"/><rect x="592" y="377.9" width="3" height="41"/><rect x="595" y="378.2" width="3" height="41"/><rect x="598" y="378.6" width="3" height="41"/><rect x="601" y="379.1" width="3" height="41"/><rect x="604" y="379.6" width="3" height="41"/><rect x="607" y="380.2" width="3" height="41"/><rect x="610" y="380.8" width="3" height="41"/><rect x="613" y="381.4" width="3" height="41"/><rect x="616" y="382.1" width="3" height="41"/><rect x="619" y="382.8" width="3" height="41"/><rect x="622" y="383.5" width="3" height="41"/><rect x="625" y="384.2" width="3" height="41"/><rect x="628" y="384.9" width="3" height="41"/><rect x="631" y="385.6" width="3" height="41"/><rect x="634" y="386.2" width="3" height="41"/><rect x="637" y="386.9" width="3" height="41"/><rect x="640" y="387.5" width="3" height="41"/><rect x="643" y="388.1" width="3" height="41"/><rect x="646" y="388.6" width="3" height="41"/><rect x="649" y="389.1" width="3" height="41"/><rect x="652" y="389.6" width="3" height="41"/><rect x="655" y="390.0" width="3" height="41"/><rect x="658" y="390.3" width="3" height="41"/><rect x="661" y="390.6" width="3" height="41"/><rect x="664" y="390.8" width="3" height="41"/><rect x="667" y="390.9" width="3" height="41"/><rect x="670" y="391.0" width="3" height="41"/><rect x="673" y="391.0" width="3" height="41"/><rect x="676" y="390.9" width="3" height="41"/><rect x="679" y="390.8" width="3" height="41"/><rect x="682" y="390.6" width="3" height="41"/><rect x="685" y="390.3" width="3" height="41"/><rect x="688" y="390.0" width="3" height="41"/><rect x="691" y="389.6" width="3" height="41"/><rect x="694" y="389.1" width="3" height="41"/><rect x="697" y="388.6" width="3" height="41"/><rect x="700" y="388.1" width="3" height="41"/><rect x="703" y="387.5" width="3" height="41"/><rect x="706" y="386.9" width="3" height="41"/><rect x="709" y="386.2" width="3" height="41"/><rect x="712" y="385.6" width="3" height="41"/><rect x="715" y="384.9" width="3" height="41"/><rect x="718" y="384.2" width="3" height="41"/><rect x="721" y="383.5" width="3" height="41"/><rect x="724" y="382.8" width="3" height="41"/><rect x="727" y="382.1" width="3" height="41"/><rect x="730" y="381.4" width="3" height="41"/><rect x="733" y="380.8" width="3" height="41"/><rect x="736" y="380.2" width="3" height="41"/><rect x="739" y="379.6" width="3" height="41"/><rect x="742" y="379.1" width="3" height="41"/><rect x="745" y="378.6" width="3" height="41"/><rect x="748" y="378.2" width="3" height="41"/><rect x="751" y="377.9" width="3" height="41"/><rect x="754" y="377.5" width="3" height="41"/><rect x="757" y="377.3" width="3" height="41"/><rect x="760" y="377.1" width="3" height="41"/><rect x="763" y="377.0" width="3" height="41"/><rect x="766" y="377.0" width="3" height="41"/><rect x="769" y="377.0" width="3" height="41"/><rect x="772" y="377.1" width="3" height="41"/><rect x="775" y="377.3" width="3" height="41"/><rect x="778" y="377.5" width="3" height="41"/><rect x="781" y="377.9" width="3" height="41"/><rect x="784" y="378.2" width="3" height="41"/><rect x="787" y="378.6" width="3" height="41"/><rect x="790" y="379.1" width="3" height="41"/><rect x="793" y="379.6" width="3" height="41"/><rect x="796" y="380.2" width="3" height="41"/><rect x="799" y="380.8" width="3" height="41"/><rect x="802" y="381.4" width="3" height="41"/><rect x="805" y="382.1" width="3" height="41"/><rect x="808" y="382.8" width="3" height="41"/><rect x="811" y="383.5" width="3" height="41"/><rect x="814" y="384.2" width="3" height="41"/><rect x="817" y="384.9" width="3" height="41"/><rect x="820" y="385.6" width="3" height="41"/><rect x="823" y="386.2" width="3" height="41"/><rect x="826" y="386.9" width="3" height="41"/><rect x="829" y="387.5" width="3" height="41"/><rect x="832" y="388.1" width="3" height="41"/><rect x="835" y="388.6" width="3" height="41"/><rect x="838" y="389.1" width="3" height="41"/><rect x="841" y="389.6" width="3" height="41"/><rect x="844" y="390.0" width="3" height="41"/><rect x="847" y="390.3" width="3" height="41"/><rect x="850" y="390.6" width="3" height="41"/><rect x="853" y="390.8" width="3" height="41"/><rect x="856" y="390.9" width="3" height="41"/><rect x="859" y="391.0" width="3" height="41"/><rect x="862" y="391.0" width="3" height="41"/><rect x="865" y="390.9" width="3" height="41"/><rect x="868" y="390.8" width="3" height="41"/><rect x="871" y="390.6" width="3" height="41"/><rect x="874" y="390.3" width="3" height="41"/><rect x="877" y="390.0" width="3" height="41"/><rect x="880" y="389.6" width="3" height="41"/><rect x="883" y="389.1" width="3" height="41"/><rect x="886" y="388.6" width="3" height="41"/><rect x="889" y="388.1" width="3" height="41"/><rect x="892" y="387.5" width="3" height="41"/><rect x="895" y="386.9" width="3" height="41"/><rect x="898" y="386.2" width="3" height="41"/><rect x="901" y="385.6" width="3" height="41"/><rect x="904" y="384.9" width="3" height="41"/><rect x="907" y="384.2" width="3" height="41"/><rect x="910" y="383.5" width="3" height="41"/><rect x="913" y="382.8" width="3" height="41"/><rect x="916" y="382.1" width="3" height="41"/><rect x="919" y="381.4" width="3" height="41"/><rect x="922" y="380.8" width="3" height="41"/><rect x="925" y="380.2" width="3" height="41"/><rect x="928" y="379.6" width="3" height="41"/><rect x="931" y="379.1" width="3" height="41"/><rect x="934" y="378.6" width="3" height="41"/><rect x="937" y="378.2" width="3" height="41"/><rect x="940" y="377.9" width="3" height="41"/><rect x="943" y="377.5" width="3" height="41"/><rect x="946" y="377.3" width="3" height="41"/><rect x="949" y="377.1" width="3" height="41"/><rect x="952" y="377.0" width="3" height="41"/><rect x="955" y="377.0" width="3" height="41"/><rect x="958" y="377.0" width="3" height="41"/><rect x="961" y="377.1" width="3" height="41"/><rect x="964" y="377.3" width="3" height="41"/><rect x="967" y="377.5" width="3" height="41"/><rect x="970" y="377.9" width="3" height="41"/><rect x="973" y="378.2" width="3" height="41"/><rect x="976" y="378.6" width="3" height="41"/><rect x="979" y="379.1" width="3" height="41"/><rect x="982" y="379.6" width="3" height="41"/><rect x="985" y="380.2" width="3" height="41"/><rect x="988" y="380.8" width="3" height="41"/><rect x="991" y="381.4" width="3" height="41"/><rect x="994" y="382.1" width="3" height="41"/><rect x="997" y="382.8" width="3" height="41"/><rect x="1000" y="383.5" width="3" height="41"/><rect x="1003" y="384.2" width="3" height="41"/><rect x="1006" y="384.9" width="3" height="41"/><rect x="1009" y="385.6" width="3" height="41"/><rect x="1012" y="386.2" width="3" height="41"/><rect x="1015" y="386.9" width="3" height="41"/><rect x="1018" y="387.5" width="3" height="41"/><rect x="1021" y="388.1" width="3" height="41"/><rect x="1024" y="388.6" width="3" height="41"/><rect x="1027" y="389.1" width="3" height="41"/><rect x="1030" y="389.6" width="3" height="41"/><rect x="1033" y="390.0" width="3" height="41"/><rect x="1036" y="390.3" width="3" height="41"/><rect x="1039" y="390.6" width="3" height="41"/><rect x="1042" y="390.8" width="3" height="41"/><rect x="1045" y="390.9" width="3" height="41"/><rect x="1048" y="391.0" width="3" height="41"/><rect x="1051" y="391.0" width="3" height="41"/><rect x="1054" y="390.9" width="3" height="41"/><rect x="1057" y="390.8" width="3" height="41"/><rect x="1060" y="390.6" width="3" height="41"/><rect x="1063" y="390.3" width="3" height="41"/><rect x="1066" y="390.0" width="3" height="41"/><rect x="1069" y="389.6" width="3" height="41"/><rect x="1072" y="389.1" width="3" height="41"/><rect x="1075" y="388.6" width="3" height="41"/><rect x="1078" y="388.1" width="3" height="41"/><rect x="1081" y="387.5" width="3" height="41"/><rect x="1084" y="386.9" width="3" height="41"/><rect x="1087" y="386.2" width="3" height="41"/><rect x="1090" y="385.6" width="3" height="41"/><rect x="1093" y="384.9" width="3" height="41"/><rect x="1096" y="384.2" width="3" height="41"/><rect x="1099" y="383.5" width="3" height="41"/><rect x="1102" y="382.8" width="3" height="41"/><rect x="1105" y="382.1" width="3" height="41"/><rect x="1108" y="381.4" width="3" height="41"/><rect x="1111" y="380.8" width="3" height="41"/><rect x="1114" y="380.2" width="3" height="41"/><rect x="1117" y="379.6" width="3" height="41"/><rect x="1120" y="379.1" width="3" height="41"/><rect x="1123" y="378.6" width="3" height="41"/><rect x="1126" y="378.2" width="3" height="41"/><rect x="1129" y="377.9" width="3" height="41"/><rect x="1132" y="377.5" width="3" height="41"/><rect x="1135" y="377.3" width="3" height="41"/><rect x="1138" y="377.1" width="3" height="41"/><rect x="1141" y="377.0" width="3" height="41"/><rect x="1144" y="377.0" width="3" height="41"/><rect x="1147" y="377.0" width="3" height="41"/><rect x="1150" y="377.1" width="3" height="41"/><rect x="1153" y="377.3" width="3" height="41"/><rect x="1156" y="377.5" width="3" height="41"/><rect x="1159" y="377.9" width="3" height="41"/><rect x="1162" y="378.2" width="3" height="41"/><rect x="1165" y="378.6" width="3" height="41"/><rect x="1168" y="379.1" width="3" height="41"/><rect x="1171" y="379.6" width="3" height="41"/><rect x="1174" y="380.2" width="3" height="41"/><rect x="1177" y="380.8" width="3" height="41"/><rect x="1180" y="381.4" width="3" height="41"/><rect x="1183" y="382.1" width="3" height="41"/><rect x="1186" y="382.8" width="3" height="41"/><rect x="1189" y="383.5" width="3" height="41"/><rect x="1192" y="384.2" width="3" height="41"/><rect x="1195" y="384.9" width="3" height="41"/><rect x="1198" y="385.6" width="3" height="41"/><rect x="1201" y="386.2" width="3" height="41"/><rect x="1204" y="386.9" width="3" height="41"/><rect x="1207" y="387.5" width="3" height="41"/><rect x="1210" y="388.1" width="3" height="41"/><rect x="1213" y="388.6" width="3" height="41"/><rect x="1216" y="389.1" width="3" height="41"/><rect x="1219" y="389.6" width="3" height="41"/><rect x="1222" y="390.0" width="3" height="41"/><rect x="1225" y="390.3" width="3" height="41"/><rect x="1228" y="390.6" width="3" height="41"/><rect x="1231" y="390.8" width="3" height="41"/><rect x="1234" y="390.9" width="3" height="41"/><rect x="1237" y="391.0" width="3" height="41"/><rect x="1240" y="391.0" width="3" height="41"/><rect x="1243" y="390.9" width="3" height="41"/><rect x="1246" y="390.8" width="3" height="41"/><rect x="1249" y="390.6" width="3" height="41"/><rect x="1252" y="390.3" width="3" height="41"/><rect x="1255" y="390.0" width="3" height="41"/><rect x="1258" y="389.6" width="3" height="41"/><rect x="1261" y="389.1" width="3" height="41"/><rect x="1264" y="388.6" width="3" height="41"/><rect x="1267" y="388.1" width="3" height="41"/></g></g></g></svg>
<div class="t" style="right:1214px;top:128.84px;font-size:12px;color:#18b0ea;">5.174 GHz</div>
<div class="t" style="right:1214px;top:158.74px;font-size:12px;color:#18b0ea;">5.074 GHz</div>
<div class="t" style="right:1214px;top:196.14px;font-size:12px;color:#18b0ea;">4.974 GHz</div>
<div class="t" style="right:1214px;top:232.44px;font-size:12px;color:#18b0ea;">4.874 GHz</div>
<div class="t" style="right:1214px;top:262.14px;font-size:12px;color:#18b0ea;">4.774 GHz</div>
<div class="t" style="left:70px;top:279.04px;font-size:12px;color:#18b0ea;">-100 µs</div>
<div class="t" style="left:-110px;width:600px;text-align:center;top:279.04px;font-size:12px;color:#18b0ea;">-80 µs</div>
<div class="t" style="left:10px;width:600px;text-align:center;top:279.04px;font-size:12px;color:#18b0ea;">-60 µs</div>
<div class="t" style="left:130px;width:600px;text-align:center;top:279.04px;font-size:12px;color:#18b0ea;">-40 µs</div>
<div class="t" style="left:250px;width:600px;text-align:center;top:279.04px;font-size:12px;color:#18b0ea;">-20 µs</div>
<div class="t" style="left:370px;width:600px;text-align:center;top:279.04px;font-size:12px;color:#18b0ea;">0 ns</div>
<div class="t" style="left:490px;width:600px;text-align:center;top:279.04px;font-size:12px;color:#18b0ea;">20 µs</div>
<div class="t" style="left:610px;width:600px;text-align:center;top:279.04px;font-size:12px;color:#18b0ea;">40 µs</div>
<div class="t" style="left:730px;width:600px;text-align:center;top:279.04px;font-size:12px;color:#18b0ea;">60 µs</div>
<div class="t" style="left:850px;width:600px;text-align:center;top:279.04px;font-size:12px;color:#18b0ea;">80 µs</div>
<div class="t" style="right:10px;top:279.04px;font-size:12px;color:#18b0ea;">100 µs</div>
<div class="t" style="right:1214px;top:349.84px;font-size:12px;color:#18b0ea;">5.074 GHz</div>
<div class="t" style="right:1214px;top:379.74px;font-size:12px;color:#18b0ea;">5.024 GHz</div>
<div class="t" style="right:1214px;top:417.14px;font-size:12px;color:#18b0ea;">4.974 GHz</div>
<div class="t" style="right:1214px;top:453.44px;font-size:12px;color:#18b0ea;">4.924 GHz</div>
<div class="t" style="right:1214px;top:483.14px;font-size:12px;color:#18b0ea;">4.874 GHz</div>
<div class="t" style="left:70px;top:500.04px;font-size:12px;color:#18b0ea;">-100 µs</div>
<div class="t" style="left:-110px;width:600px;text-align:center;top:500.04px;font-size:12px;color:#18b0ea;">-80 µs</div>
<div class="t" style="left:10px;width:600px;text-align:center;top:500.04px;font-size:12px;color:#18b0ea;">-60 µs</div>
<div class="t" style="left:130px;width:600px;text-align:center;top:500.04px;font-size:12px;color:#18b0ea;">-40 µs</div>
<div class="t" style="left:250px;width:600px;text-align:center;top:500.04px;font-size:12px;color:#18b0ea;">-20 µs</div>
<div class="t" style="left:370px;width:600px;text-align:center;top:500.04px;font-size:12px;color:#18b0ea;">0 ns</div>
<div class="t" style="left:490px;width:600px;text-align:center;top:500.04px;font-size:12px;color:#18b0ea;">20 µs</div>
<div class="t" style="left:610px;width:600px;text-align:center;top:500.04px;font-size:12px;color:#18b0ea;">40 µs</div>
<div class="t" style="left:730px;width:600px;text-align:center;top:500.04px;font-size:12px;color:#18b0ea;">60 µs</div>
<div class="t" style="left:850px;width:600px;text-align:center;top:500.04px;font-size:12px;color:#18b0ea;">80 µs</div>
<div class="t" style="right:10px;top:500.04px;font-size:12px;color:#18b0ea;">100 µs</div>
<div style="position:absolute;left:3px;top:318px;width:1261px;height:15px;background:#1c1c1c;border-top:1px solid #555;box-sizing:border-box"></div>
<div class="t" style="left:5px;top:304.70px;font-size:13px;color:#eeeeee;font-weight:bold;">Measure</div>
<div class="t" style="right:1083px;top:304.50px;font-size:13px;color:#e6e6e6;height:12.6px;overflow:hidden;">P1:freq(F1)</div>
<div class="t" style="right:1083px;top:320.20px;font-size:13px;color:#e6e6e6;">2.4846 GHz</div>
<div class="t" style="right:986px;top:304.50px;font-size:13px;color:#e6e6e6;height:12.6px;overflow:hidden;">P2:bitrate(F1)</div>
<div class="t" style="right:986px;top:320.20px;font-size:13px;color:#e6e6e6;">4.9879 Gbit/s</div>
<div class="t" style="right:889px;top:304.50px;font-size:13px;color:#e6e6e6;height:12.6px;overflow:hidden;">P3:freq@lv(F1)</div>
<div class="t" style="right:889px;top:320.20px;font-size:13px;color:#e6e6e6;">4.969 GHz</div>
<div class="t" style="right:792px;top:304.50px;font-size:13px;color:#e6e6e6;height:12.6px;overflow:hidden;">P4:freq@lv(F4)</div>
<div class="t" style="right:792px;top:320.20px;font-size:13px;color:#e6e6e6;">31.892 kHz</div>
<div class="t" style="right:695px;top:304.50px;font-size:13px;color:#474747;">P5:- - -</div>
<div class="t" style="right:598px;top:304.50px;font-size:13px;color:#474747;">P6:- - -</div>
<div class="t" style="right:501px;top:304.50px;font-size:13px;color:#474747;">P7:- - -</div>
<div class="t" style="right:404px;top:304.50px;font-size:13px;color:#474747;">P8:- - -</div>
<div class="t" style="right:307px;top:304.50px;font-size:13px;color:#474747;">P9:- - -</div>
<div class="t" style="right:210px;top:304.50px;font-size:13px;color:#474747;">P10:- - -</div>
<div class="t" style="right:113px;top:304.50px;font-size:13px;color:#474747;">P11:- - -</div>
<div class="t" style="right:16px;top:304.50px;font-size:13px;color:#474747;">P12:- - -</div>
<div class="t" style="left:5px;top:320.20px;font-size:13px;color:#e6e6e6;">value</div>
<div class="t" style="left:5px;top:334.50px;font-size:13px;color:#e6e6e6;height:10.2px;overflow:hidden;">status</div>
<div style="position:absolute;left:3px;top:539px;width:1261px;height:15px;background:#1c1c1c;border-top:1px solid #555;box-sizing:border-box"></div>
<div class="t" style="left:5px;top:525.70px;font-size:13px;color:#eeeeee;font-weight:bold;">Measure</div>
<div class="t" style="right:1083px;top:525.50px;font-size:13px;color:#e6e6e6;height:12.6px;overflow:hidden;">P1:freq(F1)</div>
<div class="t" style="right:1083px;top:541.20px;font-size:13px;color:#e6e6e6;">2.4846 GHz</div>
<div class="t" style="right:986px;top:525.50px;font-size:13px;color:#e6e6e6;height:12.6px;overflow:hidden;">P2:bitrate(F1)</div>
<div class="t" style="right:986px;top:541.20px;font-size:13px;color:#e6e6e6;">4.9879 Gbit/s</div>
<div class="t" style="right:889px;top:525.50px;font-size:13px;color:#e6e6e6;height:12.6px;overflow:hidden;">P3:freq@lv(F1)</div>
<div class="t" style="right:889px;top:541.20px;font-size:13px;color:#e6e6e6;">4.969 GHz</div>
<div class="t" style="right:792px;top:525.50px;font-size:13px;color:#e6e6e6;height:12.6px;overflow:hidden;">P4:freq@lv(F4)</div>
<div class="t" style="right:792px;top:541.20px;font-size:13px;color:#e6e6e6;">31.932 kHz</div>
<div class="t" style="right:695px;top:525.50px;font-size:13px;color:#474747;">P5:- - -</div>
<div class="t" style="right:598px;top:525.50px;font-size:13px;color:#474747;">P6:- - -</div>
<div class="t" style="right:501px;top:525.50px;font-size:13px;color:#474747;">P7:- - -</div>
<div class="t" style="right:404px;top:525.50px;font-size:13px;color:#474747;">P8:- - -</div>
<div class="t" style="right:307px;top:525.50px;font-size:13px;color:#474747;">P9:- - -</div>
<div class="t" style="right:210px;top:525.50px;font-size:13px;color:#474747;">P10:- - -</div>
<div class="t" style="right:113px;top:525.50px;font-size:13px;color:#474747;">P11:- - -</div>
<div class="t" style="right:16px;top:525.50px;font-size:13px;color:#474747;">P12:- - -</div>
<div class="t" style="left:5px;top:541.20px;font-size:13px;color:#e6e6e6;">value</div>
<div class="t" style="left:5px;top:555.00px;font-size:13px;color:#e6e6e6;">status</div>
<svg width="1280" height="570" viewBox="0 0 1280 570" style="position:absolute;left:0;top:0"><rect x="55.5" y="263.5" width="14.5" height="10.5" rx="2.5" fill="#18b0ea"/><text x="62.8" y="272.3" font-family="Liberation Sans" font-size="10.5" font-weight="bold" fill="#083a55" text-anchor="middle">F3</text><path d="M61.5,274V279M58.5,276L61.5,279L64.5,276" stroke="#18b0ea" stroke-width="1.2" fill="none"/><path d="M670.5,274.5L666.8,282L674.2,282Z" fill="#18b0ea"/><rect x="55.5" y="484.5" width="14.5" height="10.5" rx="2.5" fill="#18b0ea"/><text x="62.8" y="493.3" font-family="Liberation Sans" font-size="10.5" font-weight="bold" fill="#083a55" text-anchor="middle">F3</text><path d="M61.5,495V500M58.5,497L61.5,500L64.5,497" stroke="#18b0ea" stroke-width="1.2" fill="none"/><path d="M670.5,495.5L666.8,503L674.2,503Z" fill="#18b0ea"/><path d="M185.6,341L188.1,343.8L194,337.3" stroke="#00f000" stroke-width="2.6" fill="none" stroke-linecap="round" stroke-linejoin="round"/><path d="M282.6,341L285.1,343.8L291,337.3" stroke="#00f000" stroke-width="2.6" fill="none" stroke-linecap="round" stroke-linejoin="round"/><path d="M379.6,341L382.1,343.8L388,337.3" stroke="#00f000" stroke-width="2.6" fill="none" stroke-linecap="round" stroke-linejoin="round"/><path d="M476.6,341L479.1,343.8L485,337.3" stroke="#00f000" stroke-width="2.6" fill="none" stroke-linecap="round" stroke-linejoin="round"/><path d="M185.6,562L188.1,564.8L194,558.3" stroke="#00f000" stroke-width="2.6" fill="none" stroke-linecap="round" stroke-linejoin="round"/><path d="M282.6,562L285.1,564.8L291,558.3" stroke="#00f000" stroke-width="2.6" fill="none" stroke-linecap="round" stroke-linejoin="round"/><path d="M379.6,562L382.1,564.8L388,558.3" stroke="#00f000" stroke-width="2.6" fill="none" stroke-linecap="round" stroke-linejoin="round"/><path d="M476.6,562L479.1,564.8L485,558.3" stroke="#00f000" stroke-width="2.6" fill="none" stroke-linecap="round" stroke-linejoin="round"/><rect x="4" y="568.5" width="97" height="2" rx="1" fill="#e6b419"/><rect x="104" y="568.5" width="97" height="2" rx="1" fill="#d65a96"/><rect x="203" y="568.5" width="98" height="2" rx="1" fill="#1ea6ee"/><rect x="304" y="568.5" width="97" height="2" rx="1" fill="#94b43a"/><rect x="403" y="568.5" width="98" height="2" rx="1" fill="#e6e4b8"/><rect x="504" y="568.5" width="97" height="2" rx="1" fill="#c77ab8"/><line x1="604" y1="569.5" x2="700" y2="569.5" stroke="#ddd" stroke-width="1" stroke-dasharray="2 2"/><rect x="1063" y="568.5" width="111" height="2" rx="1" fill="#e0e0e0"/><rect x="1178" y="568.5" width="96" height="2" rx="1" fill="#e0e0e0"/></svg>
<div style="position:absolute;left:776px;top:0;width:471px;height:158px;background:#252525"></div>
<div style="position:absolute;left:782px;top:143px;width:119px;height:5px;border-left:1px solid #8a8a8a;border-bottom:1px solid #8a8a8a"></div>
<div style="position:absolute;left:919px;top:143px;width:167px;height:5px;border-left:1px solid #8a8a8a;border-bottom:1px solid #8a8a8a"></div>
<svg width="1280" height="160" style="position:absolute;left:0;top:0"><path d="M901,140L901,146L895,146Z" fill="#9a9a9a"/><path d="M1086,140L1086,146L1080,146Z" fill="#9a9a9a"/></svg>
<div style="position:absolute;left:1093px;top:116px;width:144px;height:32px;background:#505050;border:1px solid #747474;box-sizing:border-box"></div>
<div class="t" style="left:934.5px;top:17.70px;font-size:13px;color:#eaeaea;">Find frequency from data.</div>
<div class="t" style="left:541px;width:600px;text-align:center;top:116.80px;font-size:13px;color:#a8b4c0;font-style:italic;">Reference</div>
<div class="t" style="left:789.3px;top:131.40px;font-size:13px;color:#f2f2f2;">Custom</div>
<div class="t" style="left:700.5px;width:600px;text-align:center;top:116.80px;font-size:13px;color:#a8b4c0;font-style:italic;">Custom freq.</div>
<div class="t" style="left:926px;top:131.40px;font-size:13px;color:#f2f2f2;">4.98790044 GHz</div>
<div class="t" style="left:865px;width:600px;text-align:center;top:125.60px;font-size:13px;color:#f2f2f2;">Find frequency</div>
</body></html>
